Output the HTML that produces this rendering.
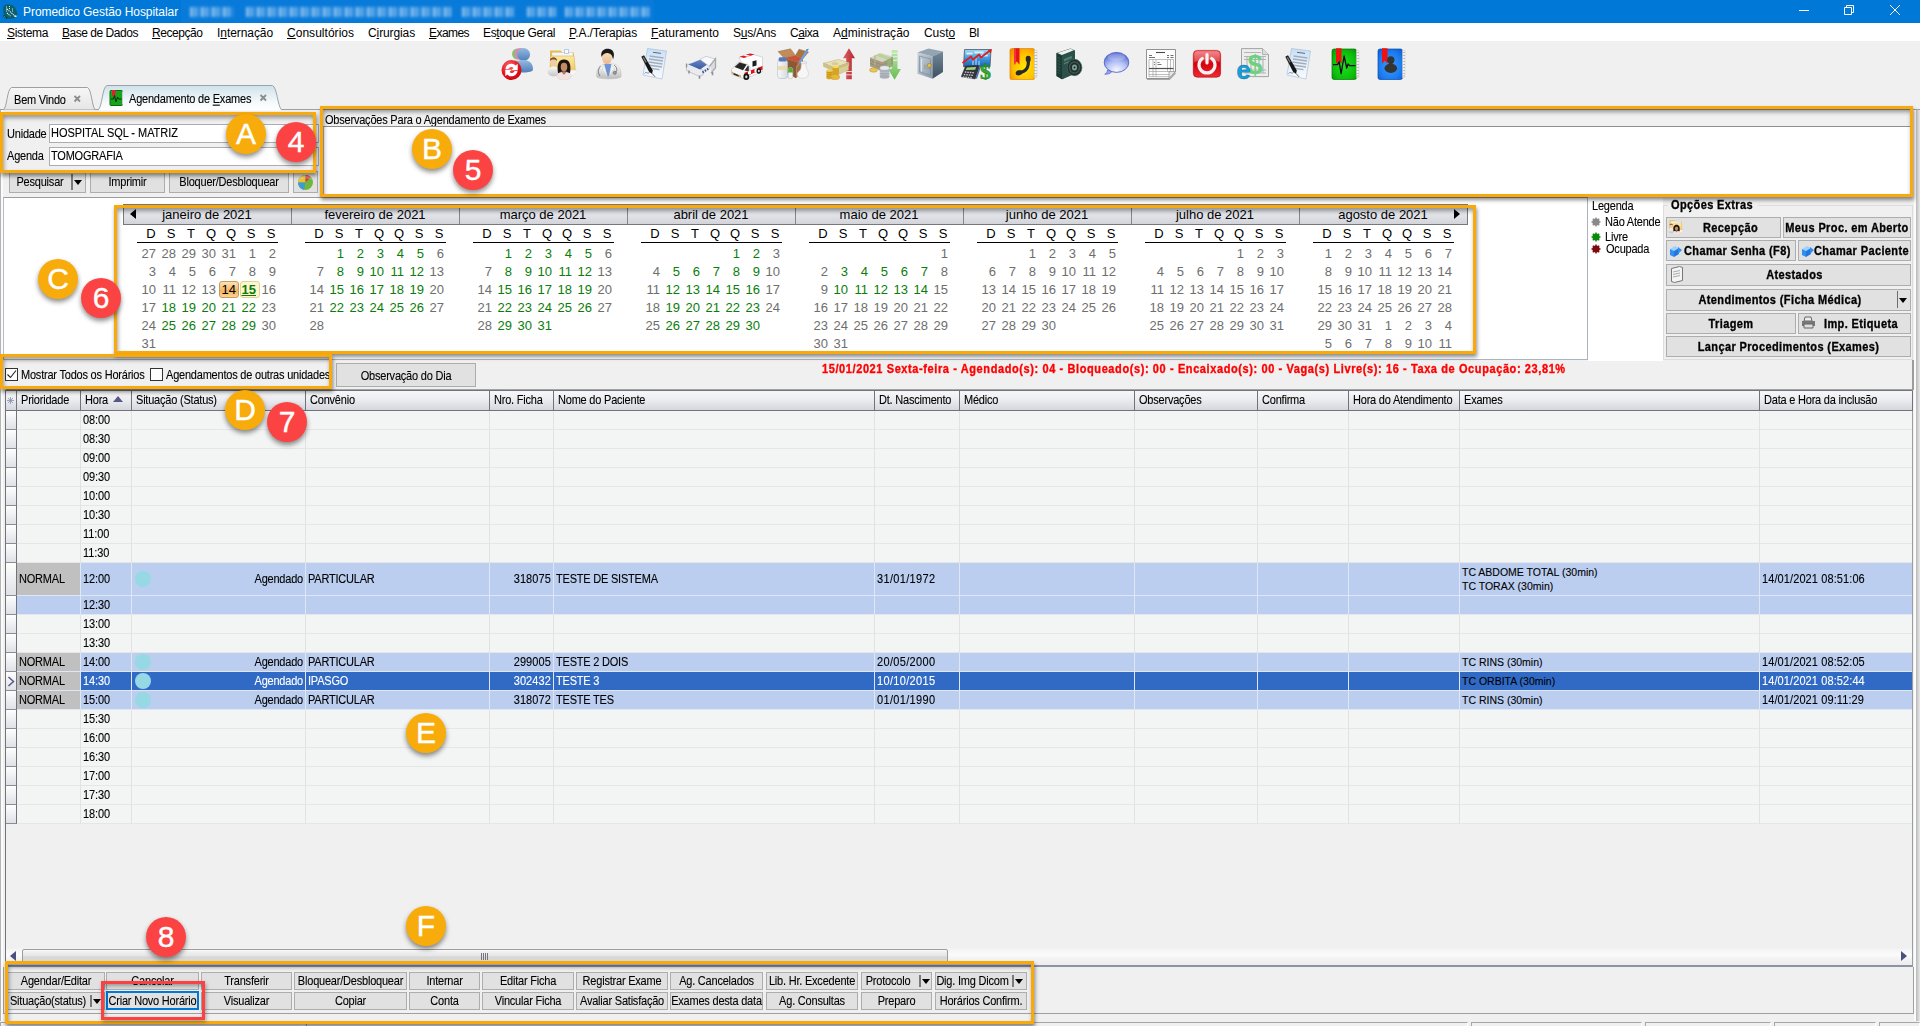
<!DOCTYPE html><html lang="pt-BR"><head><meta charset="utf-8"><title>Promedico Gestão Hospitalar</title><style>
*{box-sizing:border-box;margin:0;padding:0}
html,body{width:1920px;height:1026px;overflow:hidden;background:#f0f0f0}
body{position:relative;font-family:"Liberation Sans",sans-serif;font-size:11px;color:#000}
.a{position:absolute}
.t{position:absolute;white-space:nowrap;height:16px;line-height:16px;font-size:11px;letter-spacing:-.21px;transform:scaleY(1.12);-webkit-text-stroke:.1px}
.c{text-align:center}.r{text-align:right}
.b{font-weight:bold;letter-spacing:.38px;-webkit-text-stroke:.3px}
.btn{position:absolute;background:#e1e1e1;border:1px solid #adadad}
.ob{position:absolute;border:3px solid #f8a90c;box-shadow:1px 3px 4px rgba(0,0,0,.45),inset 1px 3px 4px rgba(0,0,0,.38)}
.circ{position:absolute;width:40px;height:40px;border-radius:50%;color:#fff;text-align:center;font-size:30px;line-height:40px;box-shadow:0 3px 5px rgba(0,0,0,.45);-webkit-text-stroke:.4px #fff}
.co{background:#f8ac0c}.cr{background:#fc4343}
.m{position:absolute;top:24px;height:18px;line-height:18px;font-size:12px;white-space:nowrap}
.m u{text-decoration:underline}
.cal{position:absolute;font-size:13px;white-space:nowrap;height:18px;line-height:18px}
.gr{color:#6e6e6e}.gn{color:#0a7d0a}
.hd{position:absolute;top:391px;height:20px;background:linear-gradient(#f7f7f9,#ecedf0 45%,#d5d7dd);border-right:1px solid #70737c;border-bottom:1px solid #70737c}
.row{position:absolute;left:17px;width:1895px;background:#f3f5f4;border-bottom:1px solid #e6e6e6}
.ind{position:absolute;left:6px;width:11px;background:linear-gradient(#fefefe,#dfe1e6);border-right:1px solid #70737c;border-bottom:1px solid #8a8d96}
.vl{position:absolute;width:1px;background:#e2e2e2}
.ar{font-size:10.500px;letter-spacing:0;transform:none}
.n{letter-spacing:.1px}
.nd{letter-spacing:.33px}
</style></head><body>
<div class="a" style="left:0;top:0;width:1920px;height:23px;background:#0078d7"></div>
<div class="a" style="left:181px;top:0;width:473px;height:24px;background:#087ad9;overflow:hidden"><div class="a" style="left:9px;top:7px;width:44px;height:10px;background:repeating-linear-gradient(90deg,#b4d8f7 0 3px,#3f97e2 3px 5px,#9ccbf3 5px 7px,#2f8de0 7px 11px);filter:blur(1.6px);opacity:.75"></div><div class="a" style="left:65px;top:7px;width:206px;height:10px;background:repeating-linear-gradient(90deg,#b4d8f7 0 3px,#3f97e2 3px 5px,#9ccbf3 5px 7px,#2f8de0 7px 11px);filter:blur(1.6px);opacity:.75"></div><div class="a" style="left:281px;top:7px;width:53px;height:10px;background:repeating-linear-gradient(90deg,#b4d8f7 0 3px,#3f97e2 3px 5px,#9ccbf3 5px 7px,#2f8de0 7px 11px);filter:blur(1.6px);opacity:.75"></div><div class="a" style="left:346px;top:7px;width:29px;height:10px;background:repeating-linear-gradient(90deg,#b4d8f7 0 3px,#3f97e2 3px 5px,#9ccbf3 5px 7px,#2f8de0 7px 11px);filter:blur(1.6px);opacity:.75"></div><div class="a" style="left:384px;top:7px;width:85px;height:10px;background:repeating-linear-gradient(90deg,#b4d8f7 0 3px,#3f97e2 3px 5px,#9ccbf3 5px 7px,#2f8de0 7px 11px);filter:blur(1.6px);opacity:.75"></div></div>
<svg class="a" style="left:2px;top:3px" width="17" height="17" viewBox="0 0 17 17"><path d="M2 2.500c3-2 8-1.500 10.500 1.500 2 2.500 3.500 6 2.500 9-1.500 2.500-7 3.500-10.500 2.500C1 13 .5 5.500 2 2.500z" fill="#0c5f6c"/><path d="M4.500 3.500v5.500M7.500 3v3M10.500 5.500v4" stroke="#dfeef0" stroke-width="1" stroke-dasharray="1 1"/><path d="M5 6l8.500 7.500M5 10l3.500 3" stroke="#eef6f7" stroke-width="1.100" stroke-dasharray="1.200 .8"/><path d="M12.500 12.500h2v1.500h-2z" fill="#e8f2f3"/><path d="M1.500 12.500l3.500 3" stroke="#0a2c33" stroke-width="1.500"/><path d="M2.500 13.500l1.500 1.300" stroke="#cfe" stroke-width=".8" stroke-dasharray=".8 .8"/></svg>
<div class="a" style="left:23px;top:3px;height:18px;line-height:18px;font-size:12px;color:#fff;white-space:nowrap;letter-spacing:-.06px">Promedico Gestão Hospitalar</div>
<svg class="a" style="left:1790px;top:0" width="130" height="23" viewBox="0 0 130 23" fill="none" stroke="#fff" stroke-width="1"><path d="M9 10.5h10"/><path d="M54.5 7.5h7v7h-7zM56.5 7.5v-2h7v7h-2"/><path d="M100 5l10 10M110 5l-10 10"/></svg>
<div class="a" style="left:0;top:23px;width:1920px;height:18px;background:#fff"></div>
<div class="m" style="left:7px;letter-spacing:-0.34px"><u>S</u>istema</div>
<div class="m" style="left:62px;letter-spacing:-0.47px"><u>B</u>ase de Dados</div>
<div class="m" style="left:152px;letter-spacing:-0.44px"><u>R</u>ecepção</div>
<div class="m" style="left:217px;letter-spacing:-0.07px">I<u>n</u>ternação</div>
<div class="m" style="left:287px;letter-spacing:0.03px"><u>C</u>onsultórios</div>
<div class="m" style="left:368px;letter-spacing:-0.11px">C<u>i</u>rurgias</div>
<div class="m" style="left:429px;letter-spacing:-0.56px"><u>E</u>xames</div>
<div class="m" style="left:483px;letter-spacing:-0.36px">Es<u>t</u>oque Geral</div>
<div class="m" style="left:569px;letter-spacing:-0.14px"><u>P</u>.A./Terapias</div>
<div class="m" style="left:651px;letter-spacing:-0.00px"><u>F</u>aturamento</div>
<div class="m" style="left:733px;letter-spacing:-0.24px">S<u>u</u>s/Ans</div>
<div class="m" style="left:790px;letter-spacing:-0.44px">C<u>a</u>ixa</div>
<div class="m" style="left:833px;letter-spacing:0.04px">A<u>d</u>ministração</div>
<div class="m" style="left:924px;letter-spacing:-0.07px">Cust<u>o</u></div>
<div class="m" style="left:969px;letter-spacing:-0.67px">BI</div>
<svg class="a" style="left:501px;top:48px" width="32" height="32" viewBox="0 0 32 32"><defs><linearGradient id="i0a" x1="0" y1="0" x2="0" y2="1"><stop offset="0" stop-color="#97b9df"/><stop offset="1" stop-color="#4d80bc"/></linearGradient><radialGradient id="i0b" cx="0.4" cy="0.3" r="0.8"><stop offset="0" stop-color="#ff6a6e"/><stop offset="0.6" stop-color="#e3101c"/><stop offset="1" stop-color="#c4000c"/></radialGradient></defs><circle cx="16.500" cy="6" r="5.500" fill="#84c46c"/><path d="M9 20c0-5 3-7.500 7.500-7.500v9z" fill="#84c46c"/><circle cx="19.300" cy="6" r="6" fill="#d889b2"/><path d="M11.500 21c0-5.500 3-8.500 8-8.500v9z" fill="#d889b2"/><circle cx="22.600" cy="6.500" r="6.500" fill="url(#i0a)"/><path d="M13.500 21.500c0-6 3-9.500 9-9.500s9.500 3.500 9.500 9.500c0 2-4 3-9.500 3s-9-1-9-3z" fill="url(#i0a)"/><circle cx="10.500" cy="22" r="10" fill="url(#i0b)"/><path d="M4.500 21a6 6 0 0 1 10.300-3.400l1.900-1.800v6.400h-6.400l2.200-2.200a3.200 3.200 0 0 0-5.200 1z" fill="#fff"/><path d="M16.500 23a6 6 0 0 1-10.300 3.400l-1.900 1.800v-6.400h6.400l-2.200 2.200a3.200 3.200 0 0 0 5.200-1z" fill="#fff"/></svg>
<svg class="a" style="left:547px;top:48px" width="32" height="32" viewBox="0 0 32 32"><defs><linearGradient id="i1a" x1="0" y1="0" x2="0" y2="1"><stop offset="0" stop-color="#fde9a4"/><stop offset="1" stop-color="#efc558"/></linearGradient><linearGradient id="i1b" x1="0" y1="0" x2="0" y2="1"><stop offset="0" stop-color="#fafafa"/><stop offset="1" stop-color="#c4c4c4"/></linearGradient></defs><path d="M3 2.500h10.500l2 2H27v20H3z" fill="#e6bd55"/><path d="M5 4.500h21v7H5z" fill="#f6f6f6" stroke="#c8c8c8" stroke-width=".4"/><path d="M17.500 1.500h4v4h-4z" fill="#fafafa" stroke="#7aa0d8" stroke-width=".5"/><path d="M3.500 8h23.500l1.500 17H3z" fill="url(#i1a)" stroke="#d3a53c" stroke-width=".5"/><path d="M24 22l7 .5-4 4.500h-8z" fill="#f6f6f6" stroke="#ddd" stroke-width=".4"/><ellipse cx="6.500" cy="23.500" rx="6" ry="5" fill="url(#i1b)"/><ellipse cx="6.500" cy="14" rx="3.400" ry="4.200" fill="#f1cda6"/><path d="M3 13c-.5-5 7.500-5 7 0-1.500-2-5.500-2-7 0z" fill="#80562f"/><path d="M11 25c-1.500-9.500 1-13.500 6-13.500s7.500 4 6 13.500z" fill="#1b1310"/><ellipse cx="17" cy="19" rx="3.300" ry="4.200" fill="#c58b63"/><ellipse cx="17" cy="28" rx="7" ry="4.300" fill="#f1e3e3" stroke="#d4c4c4" stroke-width=".4"/><path d="M14.500 24l2.500 3 2.500-3z" fill="#b57a55"/></svg>
<svg class="a" style="left:593px;top:48px" width="32" height="32" viewBox="0 0 32 32"><defs><linearGradient id="i2a" x1="0" y1="0" x2="0" y2="1"><stop offset="0" stop-color="#ffffff"/><stop offset="1" stop-color="#bdbdbd"/></linearGradient><linearGradient id="i2b" x1="0" y1="0" x2="0" y2="1"><stop offset="0" stop-color="#fae3c3"/><stop offset="1" stop-color="#e9b98c"/></linearGradient></defs><path d="M3.800 29c-1-8.500 3-13.500 12.200-13.500S29 20.500 28 29c-4 2.500-20.200 2.500-24.200 0z" fill="url(#i2a)" stroke="#b4b4b4" stroke-width=".4"/><path d="M11 16h7.500l-1.700 11.500-2.300 1.500z" fill="#6b95d6"/><path d="M11 16l3.500 13-5-8zM18.500 16l-2.500 13 5-9z" fill="#f4f4f4" stroke="#c8c8c8" stroke-width=".4"/><ellipse cx="14" cy="9.500" rx="5" ry="6.700" fill="url(#i2b)"/><path d="M8.500 9c-1.500-6.500 3.500-9 8-8s5.500 5.500 3.500 10.500c-.5-3.500-1.500-5.800-4.500-6.300-3-.5-5.500.8-7 3.800z" fill="#191919"/><path d="M7.500 18c-3 4-2.500 7.500-.5 10M21 17c3.500 2.500 3.500 5.500 1.500 7.500" stroke="#6a6a6a" fill="none" stroke-width=".8"/><circle cx="21.800" cy="24.800" r="1.600" fill="#9a9a9a" stroke="#555" stroke-width=".5"/></svg>
<svg class="a" style="left:639px;top:48px" width="32" height="32" viewBox="0 0 32 32"><defs><linearGradient id="i3a" x1="0" y1="0" x2="0" y2="1"><stop offset="0" stop-color="#c6def6"/><stop offset="0.5" stop-color="#e6f0fa"/><stop offset="1" stop-color="#f7fafd"/></linearGradient></defs><path d="M8.500 .5l19 2.500-4.500 28-19-4z" fill="url(#i3a)" stroke="#a3b9d3" stroke-width=".6"/><path d="M14 4.300l8 1.100" stroke="#5a6a80" stroke-width="1"/><path d="M10.500 8l14 2M10 11l14 2M9.500 14l14 2M9 17l14 2M8.500 20l12 1.700" stroke="#a3aebd" stroke-width="1.300"/><path d="M2.300 8.800l2.700-1.600 8.800 15.300-.8 3.200-2.800-1.800z" fill="#161616"/><path d="M3.500 9.500l1.300-.8 3 5.300-1.300.8z" fill="#777"/><path d="M12.800 25.200l3.200 3.600" stroke="#444" stroke-width=".8"/><path d="M5.500 25.500c2-2.500 3 1 5-1.200" stroke="#4a6ea8" fill="none" stroke-width=".8"/></svg>
<svg class="a" style="left:685px;top:48px" width="32" height="32" viewBox="0 0 32 32"><defs><linearGradient id="i4a" x1="0" y1="0" x2="0" y2="1"><stop offset="0" stop-color="#6787c7"/><stop offset="1" stop-color="#3a5aa3"/></linearGradient></defs><path d="M1.500 17.500l3.500-2 13 6.500v5l-3.500 1.500-13-6z" fill="#e9ebee" stroke="#a9adb5" stroke-width=".6"/><path d="M3.500 16.500l12-5 9 3.500-9.500 6.500z" fill="url(#i4a)"/><path d="M15 11.500l6-3.200 9 2.700-5.500 7.500z" fill="#f8f9fb" stroke="#b3b7be" stroke-width=".6"/><path d="M24.500 18.500l6-7.800v9l-4.500 5.500" stroke="#a3a7ae" fill="none" stroke-width="1.300"/><path d="M27 15.500v8M29 13v8" stroke="#b8bcc3" stroke-width=".8"/><path d="M1.500 15.500v4" stroke="#8d9199" stroke-width="1.300"/><path d="M17.500 24.500l7-4.500" stroke="#3a5aa3" stroke-width="2.200" stroke-dasharray="1.600 1.100"/><path d="M14.500 27.500v3.300M4 22.500v3M27.500 24v3.300" stroke="#8d9199" stroke-width="1.600"/></svg>
<svg class="a" style="left:731px;top:48px" width="32" height="32" viewBox="0 0 32 32"><path d="M8 9.500l12-3.500 11.500 3v14.500l-13 5.500z" fill="#fdfdfd" stroke="#c2c2c2" stroke-width=".6"/><path d="M8.500 8.700l10.500-3.200 4.500 1.100-10.500 3.400z" fill="#e8141c"/><path d="M12 7.600l3-.9 4.500 1.100-3 1z" fill="#fafafa"/><path d="M.5 21.500l7-7.500 9.500 2.500 2 2.800v9.700l-5 2.200-13.500-5z" fill="#f6f6f6" stroke="#b9b9b9" stroke-width=".6"/><path d="M3.500 19l5-4.500 7.200 2-3.700 5.700z" fill="#262626"/><path d="M13.500 22.500l3.500-5 .8 1v5z" fill="#333"/><path d="M21.500 13.300l4-1.100v5.300l-4 1.300z" fill="#1d1d1d"/><path d="M13.500 24.800l18-6.800v3.500l-18 7.200z" fill="#e01018"/><path d="M17 23.500l3-1.200v3.600l-3 1.200zM23.500 21l3-1.100v3.500l-3 1.200z" fill="#fdfdfd"/><ellipse cx="15.300" cy="28.700" rx="2.900" ry="3.300" fill="#0f0f0f"/><ellipse cx="15.300" cy="28.700" rx="1.200" ry="1.500" fill="#d8d8d8"/><ellipse cx="27.800" cy="23" rx="2.300" ry="2.800" fill="#0f0f0f"/><ellipse cx="27.800" cy="23" rx="1" ry="1.200" fill="#d8d8d8"/><path d="M2.300 24.800l5.500 2.200v1.800l-5.500-2.200z" fill="#2b2b2b"/><path d="M.8 23.600l1.600.6v1.700l-1.600-.6zM7.800 26.700l2.200.9v1.700l-2.200-.9z" fill="#f5a11c"/></svg>
<svg class="a" style="left:777px;top:48px" width="32" height="32" viewBox="0 0 32 32"><defs><linearGradient id="i6a" x1="0" y1="0" x2="1" y2="0"><stop offset="0" stop-color="#f7f9fb"/><stop offset="1" stop-color="#d5dbe2"/></linearGradient></defs><path d="M1 3.500l12.500-2.700 5 6.700-11.500 2.500z" fill="#c28c5a" stroke="#8e5f36" stroke-width=".4"/><path d="M18.500 7.500l3.500-6.300 9.500 2.800-5.500 6.500z" fill="#aa7440" stroke="#8e5f36" stroke-width=".4"/><path d="M7 10l11.500-2.500 7.500 3-6 3.800z" fill="#c5543b"/><path d="M11 11.500l9 2.800 6-3.800v3l-6 5z" fill="#b8482f"/><path d="M7 10l13 4.300-1 16-9-5z" fill="#8d5934"/><path d="M20 14.300l6-3.800v12l-7 7.800z" fill="#a66e43"/><rect x=".6" y="12" width="10" height="18.500" rx="2.600" fill="url(#i6a)" stroke="#b3bac3" stroke-width=".6"/><rect x="1.600" y="9.300" width="8" height="4.200" rx="1.600" fill="#5679ba"/><rect x="1" y="18" width="9.200" height="4" fill="#ead9a0" opacity=".85"/><path d="M30.300 2l-7.800 13" stroke="#6ea0da" stroke-width="2.200"/><path d="M31.500 1.200l-2.500 1" stroke="#4a78b8" stroke-width="1"/><path d="M22.500 15l-2.500 4" stroke="#a0a0a0" stroke-width=".9"/><path d="M24.500 14.500h4.500v4l2.500 6c0 4.200-2 5.800-6 5.800s-5.200-2-5.200-4.200 3.200-3 3.700-6z" fill="#f6f6f6" stroke="#c6c6c6" stroke-width=".5"/><rect x="24" y="13.500" width="5.500" height="2.200" rx=".6" fill="#ececec" stroke="#bdbdbd" stroke-width=".4"/><rect x="11.200" y="19.500" width="4.600" height="11.300" rx="2.300" fill="#f3f3f3" stroke="#b8b8b8" stroke-width=".5"/><path d="M11.200 24.500v-2.700a2.300 2.300 0 0 1 4.600 0v2.700z" fill="#4fb03a"/></svg>
<svg class="a" style="left:823px;top:48px" width="32" height="32" viewBox="0 0 32 32"><defs><linearGradient id="i7a" x1="0" y1="0" x2="1" y2="0"><stop offset="0" stop-color="#de6166"/><stop offset="1" stop-color="#b3262d"/></linearGradient></defs><path d="M26 .3l6 9.900h-3.200v21h-5.600v-21H20z" fill="url(#i7a)"/><path d="M23.200 23.500h5.600M23.200 26.800h5.600" stroke="#f0f0f0" stroke-width=".9"/><path d="M.5 15.200l15-3.700 10.500 3.200-15 5z" fill="#e9e2b4" stroke="#b5ab74" stroke-width=".5"/><path d="M.5 15.200v3.300l10.500 4.700 15-5.200v-3.300l-15 5z" fill="#cdc389" stroke="#b5ab74" stroke-width=".4"/><ellipse cx="12" cy="15.500" rx="3.500" ry="1.600" fill="#d6cd98"/><path d="M14.500 20.500l11-4v5.500l-9 4z" fill="#d8cf98" stroke="#b5ab74" stroke-width=".4"/><rect x="9.500" y="18.800" width="6.400" height="9.500" fill="#deac2c"/><ellipse cx="12.700" cy="18.800" rx="3.200" ry="1.400" fill="#f7da64"/><path d="M9.500 21h6.400M9.500 23h6.400M9.500 25h6.400" stroke="#b98a18" stroke-width=".5"/><rect x="3.500" y="22.500" width="6.200" height="7.500" fill="#d9a724"/><ellipse cx="6.600" cy="22.500" rx="3.100" ry="1.300" fill="#f3cf55"/><path d="M3.500 24.500h6.200M3.500 26.500h6.200M3.500 28.500h6.200" stroke="#b98a18" stroke-width=".5"/><ellipse cx="12" cy="29" rx="4.600" ry="2.800" fill="#e6b836" stroke="#b98a18" stroke-width=".4"/><ellipse cx="6.600" cy="30" rx="3.100" ry="1.300" fill="#d9a724"/></svg>
<svg class="a" style="left:869px;top:48px" width="32" height="32" viewBox="0 0 32 32"><defs><linearGradient id="i8a" x1="0" y1="0" x2="0" y2="1"><stop offset="0" stop-color="#bfe8ac"/><stop offset="1" stop-color="#69bb52"/></linearGradient></defs><path d="M22.700 2h5.800v19H32l-6.400 10.800L19 21h3.700z" fill="url(#i8a)"/><path d="M22.700 5.200h5.800M22.700 8.700h5.800M22.700 12.200h5.800" stroke="#f0f0f0" stroke-width="1.100"/><path d="M1 9.500l10.500-4.500 12.500 3.500-10.500 5.500z" fill="#dcd2bf"/><path d="M1 9.500v8.800l12.500 5.200 10.500-5.800V8.500l-10.500 5.500z" fill="#a89b83"/><path d="M1 12.300l12.500 5 10.500-5.600M1 15.200l12.500 5 10.500-5.600" stroke="#877b66" stroke-width=".5" fill="none"/><path d="M6 7.300l4.200-1.800 12 4.200-4 2z" fill="#b5d49b"/><path d="M18.200 11.700l4-2v9.300l-4 2.200z" fill="#8fb674"/><path d="M6 7.300v10.300" stroke="#9cc283" stroke-width="1.200"/><ellipse cx="4.500" cy="22" rx="4" ry="2.200" fill="#e6c75a" stroke="#b3932a" stroke-width=".5"/><rect x="10.800" y="20" width="9.600" height="8.500" fill="#b9bec6"/><ellipse cx="15.600" cy="28.500" rx="4.800" ry="2.200" fill="#a9aeb6"/><ellipse cx="15.600" cy="20" rx="4.800" ry="2.200" fill="#e6e9ed" stroke="#a1a6ae" stroke-width=".4"/><path d="M10.800 23h9.600M10.800 25.500h9.600" stroke="#8f949c" stroke-width=".5"/></svg>
<svg class="a" style="left:915px;top:48px" width="32" height="32" viewBox="0 0 32 32"><defs><linearGradient id="i9a" x1="0" y1="0" x2="1" y2="1"><stop offset="0" stop-color="#c9d3dc"/><stop offset="1" stop-color="#8a9aa8"/></linearGradient><linearGradient id="i9b" x1="0" y1="0" x2="0" y2="1"><stop offset="0" stop-color="#73899a"/><stop offset="1" stop-color="#3c4f5f"/></linearGradient></defs><path d="M2.500 4.500l11-4 14.500 3-10.500 5z" fill="#93a4b3"/><path d="M2.500 4.500l15 4v22.300l-15-5z" fill="url(#i9a)"/><path d="M17.500 8.500l10.500-5v20.500l-10.500 6.800z" fill="url(#i9b)"/><path d="M4.500 8l11 3v16.500l-11-3.700z" fill="none" stroke="#7c8c9a" stroke-width=".7"/><path d="M6.500 11v12.500" stroke="#dfe5ea" stroke-width="1.200"/><path d="M9.500 17l5 1.300v3l-5-1.300z" fill="#9fb0be" stroke="#7c8c9a" stroke-width=".4"/><circle cx="14.200" cy="17.500" r="2.100" fill="#e6bd3e" stroke="#96761a" stroke-width=".5"/></svg>
<svg class="a" style="left:961px;top:48px" width="32" height="32" viewBox="0 0 32 32"><defs><linearGradient id="i10a" x1="0" y1="0" x2="0" y2="1"><stop offset="0" stop-color="#9fd8f7"/><stop offset="0.5" stop-color="#3f9be0"/><stop offset="1" stop-color="#1c62b5"/></linearGradient></defs><path d="M3.500 1.500h26.500l-1 17.200H2.500z" fill="url(#i10a)" stroke="#4a5866" stroke-width=".8"/><path d="M6 5.500h5M14 4.500h8M21 7.500h5" stroke="#eef7fd" stroke-width="1.800" opacity=".85" stroke-linecap="round"/><path d="M12 12v5M15 10v7M18 13v4" stroke="#d8ecfb" stroke-width=".9"/><path d="M1.500 15l8.500-6.500 2 3.200 6-5.200 2 3 9-7" stroke="#e01c1c" stroke-width="1.700" fill="none"/><path d="M31 1l-1.200 4.500-3-3z" fill="#e01c1c"/><path d="M4.500 18l12.500-.6 1.200 2.600-4 11-14-2.200z" fill="#33353b" stroke="#1f2125" stroke-width=".4"/><path d="M5.800 19.400l9.200-.4-.8 2.700-9.400.3z" fill="#a2d37c"/><path d="M3.800 24l9.200.8M2.800 26.500l9.200.9M1.800 29l9.200 1" stroke="#c2c6cd" stroke-width="1.400" stroke-dasharray="1.600 .9"/><path d="M19.300 18.500l-4 12" stroke="#4a78b8" stroke-width="1.500"/><text x="19" y="30.500" font-size="22" font-weight="bold" fill="#2fab2f" stroke="#187a18" stroke-width=".5" font-family="Liberation Serif,serif">$</text></svg>
<svg class="a" style="left:1007px;top:48px" width="32" height="32" viewBox="0 0 32 32"><defs><radialGradient id="i11a" cx="0.6" cy="0.6" r="0.75"><stop offset="0" stop-color="#ffe600"/><stop offset="0.55" stop-color="#ffc400"/><stop offset="1" stop-color="#f78f00"/></radialGradient></defs><rect x="3" y=".6" width="24.500" height="31" rx="1.600" fill="url(#i11a)" stroke="#dc8200" stroke-width=".7"/><rect x="27.400" y="2.500" width="2.600" height="27" fill="#f4f4f4" stroke="#c4c4c4" stroke-width=".4"/><path d="M27.400 4.500h2.600M27.400 7.500h2.600M27.400 10.500h2.600M27.400 13.500h2.600M27.400 16.500h2.600M27.400 19.500h2.600M27.400 22.500h2.600M27.400 25.500h2.600M27.400 28h2.600" stroke="#a8a8a8" stroke-width=".7"/><path d="M7 .3h5.500v16.500l-2.700-3.200-2.800 3.200z" fill="#e8141c"/><path d="M7 .3h2v16l-2 .5z" fill="#ff4a4a" opacity=".6"/><path d="M21.300 11.500C22 19.500 19 24 12 24.600" stroke="#28282e" stroke-width="3.200" fill="none"/><ellipse cx="21.200" cy="11" rx="2.500" ry="3.300" fill="#28282e"/><ellipse cx="12" cy="24.800" rx="3.400" ry="2.500" transform="rotate(-12 12 24.800)" fill="#28282e"/></svg>
<svg class="a" style="left:1053px;top:48px" width="32" height="32" viewBox="0 0 32 32"><path d="M3.500 5l14-4.500 4.500 2v23l-13 5.700-5.500-3.200z" fill="#284c45"/><path d="M3.500 5l5.500 3.200v23l-5.500-3.200z" fill="#1c3a33"/><path d="M4.300 4.900l13.300-4.200 3.300 1.500-12 4.700z" fill="#edf1ee"/><path d="M9 8.200l13-5.700v23l-13 5.700z" fill="#2b514a"/><path d="M11 11l8-3.300v2.500l-8 3.300zM11 15l5-2v1.500l-5 2z" fill="#5b8a80" opacity=".75"/><path d="M5.200 9v16M6.800 10v16" stroke="#4f7d73" stroke-width=".5" stroke-dasharray="1.500 1.500"/><ellipse cx="21.500" cy="19.500" rx="7.400" ry="8.200" fill="#1f2f2b" stroke="#47665e" stroke-width=".7"/><ellipse cx="21.500" cy="19.500" rx="5" ry="5.600" fill="none" stroke="#3a5750" stroke-width="1.500"/><ellipse cx="21.500" cy="19.500" rx="2.500" ry="2.900" fill="#7fa398"/><circle cx="21.500" cy="19.500" r="1" fill="#16211e"/></svg>
<svg class="a" style="left:1099px;top:48px" width="32" height="32" viewBox="0 0 32 32"><defs><radialGradient id="i13a" cx="0.5" cy="0.9" r="0.95"><stop offset="0" stop-color="#f6f8ff"/><stop offset="0.45" stop-color="#b4c1f5"/><stop offset="1" stop-color="#3c4fca"/></radialGradient></defs><path d="M8.500 22c-.3 2.200-1.300 3.400-2.800 4.200 3.300.3 5.800-.8 7.300-2.700z" fill="#93a4ec" stroke="#4759c3" stroke-width=".6"/><ellipse cx="17.500" cy="14.400" rx="12.300" ry="10" fill="url(#i13a)" stroke="#4355c0" stroke-width=".8"/><ellipse cx="17.500" cy="9" rx="9" ry="3.800" fill="#fff" opacity=".22"/></svg>
<svg class="a" style="left:1145px;top:48px" width="32" height="32" viewBox="0 0 32 32"><path d="M2 31.300h22.500l6-6.300" stroke="#a8a8a8" stroke-width="1.200" fill="none"/><path d="M1.500 1.500h29v22l-6.500 7H1.500z" fill="#fdfdfd" stroke="#868686" stroke-width=".9"/><path d="M24 30.500v-7h6.500z" fill="#e6e6e6" stroke="#868686" stroke-width=".7"/><path d="M11 4.500h9" stroke="#4a4a4a" stroke-width="1.100"/><path d="M4 7.500h3M4 9.500h6M22 7.500h2M25.500 7.500h3M22 9.500h2M25.500 9.500h3" stroke="#707070" stroke-width="1"/><path d="M4 11.500h24.500M4 23.500h20M4 26.500h20M4 28.700h20M4 11.500v17.200M8 11.500v17.200M11 11.500v17.200M22.500 11.500v12M25.500 11.500v12M28.500 11.500v12" stroke="#a2a2a2" stroke-width=".7" fill="none"/><path d="M9 14.500h1M9 16.500h1M12.500 14.500h2M12.500 16.500h4" stroke="#6a6a6a" stroke-width=".9"/><path d="M4 20.500h24.500" stroke="#505050" stroke-width="1.200"/></svg>
<svg class="a" style="left:1191px;top:48px" width="32" height="32" viewBox="0 0 32 32"><defs><linearGradient id="i15a" x1="0" y1="0" x2="0" y2="1"><stop offset="0" stop-color="#f26a6e"/><stop offset="0.5" stop-color="#d4000d"/><stop offset="1" stop-color="#ec2e36"/></linearGradient></defs><rect x="2.300" y="2.400" width="27.300" height="26.800" rx="4" fill="url(#i15a)" stroke="#b4000a" stroke-width=".6"/><path d="M3.300 6.400a3 3 0 0 1 3-3h19.400a3 3 0 0 1 3 3v7.600c-8-3-17.400-3-25.400 0z" fill="#fff" opacity=".22"/><path d="M11.300 10.500a8 8 0 1 0 9.400 0" stroke="#f1f1f1" stroke-width="3.200" fill="none" stroke-linecap="round"/><path d="M16 6.700v8.300" stroke="#f1f1f1" stroke-width="3.200" stroke-linecap="round"/></svg>
<svg class="a" style="left:1237px;top:48px" width="32" height="32" viewBox="0 0 32 32"><path d="M4.500 .6h21l6 6v22h-27z" fill="#ededed" stroke="#9a9a9a" stroke-width=".9"/><path d="M25.500 .6v6h6" fill="#dcdcdc" stroke="#9a9a9a" stroke-width=".7"/><path d="M7 4.500h17M7 8.500h22M7 11.500h22M7 22h22M7 25h22M10 8.500v16.500M14 8.500v16.500M22 8.500v16.500M26 8.500v16.500" stroke="#b4b4b4" stroke-width="1.100" fill="none"/><text x="10.500" y="25.500" font-size="27" font-weight="bold" fill="#6fd081" font-family="Liberation Sans,sans-serif">$</text><text x="-.8" y="31.300" font-size="26" font-weight="bold" fill="#169fdc" stroke="#0b6fa8" stroke-width=".3" font-family="Liberation Sans,sans-serif">e</text></svg>
<svg class="a" style="left:1283px;top:48px" width="32" height="32" viewBox="0 0 32 32"><defs><linearGradient id="i17a" x1="0" y1="0" x2="0" y2="1"><stop offset="0" stop-color="#c6def6"/><stop offset="0.5" stop-color="#e6f0fa"/><stop offset="1" stop-color="#f7fafd"/></linearGradient></defs><path d="M8.500 .5l19 2.500-4.500 28-19-4z" fill="url(#i17a)" stroke="#a3b9d3" stroke-width=".6"/><path d="M14 4.300l8 1.100" stroke="#5a6a80" stroke-width="1"/><path d="M10.500 8l14 2M10 11l14 2M9.500 14l14 2M9 17l14 2M8.500 20l12 1.700" stroke="#a3aebd" stroke-width="1.300"/><path d="M2.300 8.800l2.700-1.600 8.800 15.300-.8 3.200-2.800-1.800z" fill="#161616"/><path d="M3.500 9.500l1.300-.8 3 5.300-1.300.8z" fill="#777"/><path d="M12.800 25.200l3.200 3.600" stroke="#444" stroke-width=".8"/><path d="M5.500 25.500c2-2.500 3 1 5-1.200" stroke="#4a6ea8" fill="none" stroke-width=".8"/></svg>
<svg class="a" style="left:1329px;top:48px" width="32" height="32" viewBox="0 0 32 32"><defs><radialGradient id="i18a" cx="0.5" cy="0.55" r="0.75"><stop offset="0" stop-color="#1fe01f"/><stop offset="0.6" stop-color="#0cc00c"/><stop offset="1" stop-color="#078c07"/></radialGradient></defs><rect x="3" y="1" width="24.500" height="30.500" rx="2" fill="url(#i18a)" stroke="#067606" stroke-width=".7"/><rect x="27.400" y="2.500" width="2.600" height="27" fill="#f4f4f4" stroke="#c4c4c4" stroke-width=".4"/><path d="M27.400 4.500h2.600M27.400 7.500h2.600M27.400 10.500h2.600M27.400 13.500h2.600M27.400 16.500h2.600M27.400 19.500h2.600M27.400 22.500h2.600M27.400 25.500h2.600M27.400 28h2.600" stroke="#a8a8a8" stroke-width=".7"/><path d="M7 .3h5.500v15.500l-2.700-3.200-2.800 3.200z" fill="#f21010"/><path d="M4 16.600h4.600l1.500-3 2 12 3-17.600 2.600 12 1.400-4 1.500 1.600h5.900" stroke="#1c0a1c" stroke-width="1.300" fill="none" stroke-linejoin="round"/></svg>
<svg class="a" style="left:1375px;top:48px" width="32" height="32" viewBox="0 0 32 32"><defs><radialGradient id="i19a" cx="0.5" cy="0.55" r="0.75"><stop offset="0" stop-color="#3a9cff"/><stop offset="0.6" stop-color="#1b7df0"/><stop offset="1" stop-color="#0d56cc"/></radialGradient></defs><rect x="3" y="1" width="24.500" height="30.500" rx="2" fill="url(#i19a)" stroke="#0b48ae" stroke-width=".7"/><rect x="27.400" y="2.500" width="2.600" height="27" fill="#f4f4f4" stroke="#c4c4c4" stroke-width=".4"/><path d="M27.400 4.500h2.600M27.400 7.500h2.600M27.400 10.500h2.600M27.400 13.500h2.600M27.400 16.500h2.600M27.400 19.500h2.600M27.400 22.500h2.600M27.400 25.500h2.600M27.400 28h2.600" stroke="#a8a8a8" stroke-width=".7"/><path d="M7 .3h5.500v15.500l-2.700-3.200-2.800 3.200z" fill="#f21010"/><circle cx="15.800" cy="12" r="3.700" fill="#343434"/><rect x="14" y="14.500" width="3.600" height="3" fill="#343434"/><ellipse cx="15.800" cy="20.300" rx="6.300" ry="4.600" fill="#343434"/></svg>
<div class="a" style="left:0;top:110px;width:1px;height:911px;background:#b4b4b4"></div><div class="a" style="left:1px;top:110px;width:2px;height:911px;background:#fbfbfb"></div>
<div class="a" style="left:1914px;top:110px;width:2px;height:911px;background:#fbfbfb"></div><div class="a" style="left:1916px;top:110px;width:4px;height:911px;background:linear-gradient(90deg,#b9b9b9,#e8e8e8)"></div>
<svg class="a" style="left:0;top:84px" width="300" height="28" viewBox="0 0 300 28"><defs><linearGradient id="tg" x1="0" y1="0" x2="0" y2="1"><stop offset="0" stop-color="#cfe1ea"/><stop offset=".7" stop-color="#f6fafc"/><stop offset="1" stop-color="#ffffff"/></linearGradient><linearGradient id="tg2" x1="0" y1="0" x2="0" y2="1"><stop offset="0" stop-color="#f6f6f6"/><stop offset="1" stop-color="#e6e6e6"/></linearGradient></defs><path d="M0 25.500H300" stroke="#a0a0a0"/><path d="M3.500 25.500C7 24 7 5 11.500 3.500H87.500c4 1.500 4.500 19 7.500 22" fill="url(#tg2)" stroke="#a0a0a0"/><path d="M98 26C102.500 23 102 3 107 1.500H272.500c4.500 1.500 5 20 9 24.500" fill="url(#tg)" stroke="#9aa4ac"/><path d="M99 26H281" stroke="#fff"/><path d="M74.500 12l5.500 5.500M80 12l-5.500 5.500M260.500 11l5.500 5.500M266 11l-5.500 5.500" stroke="#8c8c8c" stroke-width="1.800"/><rect x="110" y="6.500" width="12.500" height="15" rx="1" fill="#14a51c" stroke="#0a6d10"/><path d="M122.500 7.500v13" stroke="#ccc"/><path d="M112 6h3.500v7l-1.700-2-1.800 2z" fill="#e0202a"/><path d="M111 15h2.500l1-3.500 1.500 6.500 1.500-5 1 2h3" stroke="#0b2b0b" fill="none"/></svg>
<div class="t " style="left:14px;top:92px;">Bem Vindo</div>
<div class="t " style="left:129px;top:90.5px;">Agendamento de <u>E</u>xames</div>
<div class="a" style="left:300px;top:109px;width:1620px;height:1px;background:#a0a0a0"></div>
<div class="t " style="left:7px;top:126px;">Unidade</div>
<div class="t " style="left:7px;top:148px;">Agenda</div>
<div class="a" style="left:49px;top:124px;width:270px;height:19px;background:#fff;border:1px solid #abadb3"></div>
<div class="a" style="left:49px;top:147px;width:270px;height:19px;background:#fff;border:1px solid #abadb3"></div>
<div class="t " style="left:51px;top:124.5px;letter-spacing:-.04px">HOSPITAL SQL - MATRIZ</div>
<div class="t " style="left:51px;top:147.5px;">TOMOGRAFIA</div>
<div class="btn" style="left:9px;top:171px;width:77px;height:22px;"></div>
<div class="t c" style="left:9px;top:174px;width:62px;">Pesquisar</div>
<div class="a" style="left:71px;top:174px;width:2px;height:16px;background:#7a7a7a"></div><div class="a" style="left:74px;top:180px;border:4px solid transparent;border-top:5px solid #000;border-bottom:0"></div>
<div class="btn" style="left:90px;top:171px;width:75px;height:22px;"></div>
<div class="t c " style="left:90px;top:174.0px;width:75px;">Imprimir</div>
<div class="btn" style="left:169px;top:171px;width:120px;height:22px;"></div>
<div class="t c " style="left:169px;top:174.0px;width:120px;">Bloquer/Desbloquear</div>
<div class="btn" style="left:293px;top:171px;width:25px;height:22px;"></div>
<svg class="a" style="left:297px;top:174px" width="17" height="17" viewBox="0 0 17 17"><circle cx="8.5" cy="8.5" r="7.5" fill="#6fb83a"/><path d="M8.5 8.5L1 8.5A7.5 7.5 0 0 1 8.5 1z" fill="#f0c22e"/><path d="M8.5 8.5L8.5 1A7.5 7.5 0 0 1 13.8 3.2z" fill="#dc3c34"/><path d="M8.5 8.5L7 15.850A7.500 7.500 0 0 1 1 8.500z" fill="#3f9ad8"/><path d="M2 6a7 7 0 0 1 13 0c-4-2-9-2-13 0z" fill="#fff" opacity=".3"/></svg>
<div class="t " style="left:325px;top:111.5px;">Observações Para o Agendamento de Exames</div>
<div class="a" style="left:323px;top:126px;width:1588px;height:69px;background:#fff;border:1px solid #abadb3;border-top-color:#8e8e8e"></div>
<div class="a" style="left:3px;top:197px;width:1585px;height:163px;background:#fff;border:1px solid #9c9c9c;border-left-color:#b4bcc8;border-right-color:#aab4c0;border-bottom-color:#aab4c0"></div>
<div class="a" style="left:123px;top:204px;width:1345px;height:21px;background:linear-gradient(#e9eaee,#e2e3e8 55%,#d3d4da);border:1px solid #77787c"></div>
<div class="cal c" style="left:123px;top:206px;width:168px">janeiro de 2021</div>
<div class="cal c" style="left:141px;top:225px;width:20px">D</div>
<div class="cal c" style="left:161px;top:225px;width:20px">S</div>
<div class="cal c" style="left:181px;top:225px;width:20px">T</div>
<div class="cal c" style="left:201px;top:225px;width:20px">Q</div>
<div class="cal c" style="left:221px;top:225px;width:20px">Q</div>
<div class="cal c" style="left:241px;top:225px;width:20px">S</div>
<div class="cal c" style="left:261px;top:225px;width:20px">S</div>
<div class="a" style="left:137px;top:242px;width:141px;height:1px;background:#000"></div>
<div class="cal r gr" style="left:136px;top:245px;width:20px;">27</div>
<div class="cal r gr" style="left:156px;top:245px;width:20px;">28</div>
<div class="cal r gr" style="left:176px;top:245px;width:20px;">29</div>
<div class="cal r gr" style="left:196px;top:245px;width:20px;">30</div>
<div class="cal r gr" style="left:216px;top:245px;width:20px;">31</div>
<div class="cal r gr" style="left:236px;top:245px;width:20px;">1</div>
<div class="cal r gr" style="left:256px;top:245px;width:20px;">2</div>
<div class="cal r gr" style="left:136px;top:263px;width:20px;">3</div>
<div class="cal r gr" style="left:156px;top:263px;width:20px;">4</div>
<div class="cal r gr" style="left:176px;top:263px;width:20px;">5</div>
<div class="cal r gr" style="left:196px;top:263px;width:20px;">6</div>
<div class="cal r gr" style="left:216px;top:263px;width:20px;">7</div>
<div class="cal r gr" style="left:236px;top:263px;width:20px;">8</div>
<div class="cal r gr" style="left:256px;top:263px;width:20px;">9</div>
<div class="cal r gr" style="left:136px;top:281px;width:20px;">10</div>
<div class="cal r gr" style="left:156px;top:281px;width:20px;">11</div>
<div class="cal r gr" style="left:176px;top:281px;width:20px;">12</div>
<div class="cal r gr" style="left:196px;top:281px;width:20px;">13</div>
<div class="a" style="left:219px;top:281px;width:20px;height:17px;border:1px solid #c89b58;border-radius:3px;background:linear-gradient(#fbe2b6,#f5b45f 60%,#fbd596)"></div>
<div class="cal r gr" style="left:216px;top:281px;width:20px;color:#000;">14</div>
<div class="a" style="left:240px;top:281px;width:20px;height:17px;border:1px solid #e3d58f;border-radius:3px;background:#fdf7cf"></div>
<div class="cal r gn" style="left:236px;top:281px;width:20px;font-weight:bold;text-decoration:underline;">15</div>
<div class="cal r gr" style="left:256px;top:281px;width:20px;">16</div>
<div class="cal r gr" style="left:136px;top:299px;width:20px;">17</div>
<div class="cal r gn" style="left:156px;top:299px;width:20px;">18</div>
<div class="cal r gn" style="left:176px;top:299px;width:20px;">19</div>
<div class="cal r gn" style="left:196px;top:299px;width:20px;">20</div>
<div class="cal r gn" style="left:216px;top:299px;width:20px;">21</div>
<div class="cal r gn" style="left:236px;top:299px;width:20px;">22</div>
<div class="cal r gr" style="left:256px;top:299px;width:20px;">23</div>
<div class="cal r gr" style="left:136px;top:317px;width:20px;">24</div>
<div class="cal r gn" style="left:156px;top:317px;width:20px;">25</div>
<div class="cal r gn" style="left:176px;top:317px;width:20px;">26</div>
<div class="cal r gn" style="left:196px;top:317px;width:20px;">27</div>
<div class="cal r gn" style="left:216px;top:317px;width:20px;">28</div>
<div class="cal r gn" style="left:236px;top:317px;width:20px;">29</div>
<div class="cal r gr" style="left:256px;top:317px;width:20px;">30</div>
<div class="cal r gr" style="left:136px;top:335px;width:20px;">31</div>
<div class="a" style="left:291px;top:205px;width:1px;height:19px;background:#85868a"></div>
<div class="cal c" style="left:291px;top:206px;width:168px">fevereiro de 2021</div>
<div class="cal c" style="left:309px;top:225px;width:20px">D</div>
<div class="cal c" style="left:329px;top:225px;width:20px">S</div>
<div class="cal c" style="left:349px;top:225px;width:20px">T</div>
<div class="cal c" style="left:369px;top:225px;width:20px">Q</div>
<div class="cal c" style="left:389px;top:225px;width:20px">Q</div>
<div class="cal c" style="left:409px;top:225px;width:20px">S</div>
<div class="cal c" style="left:429px;top:225px;width:20px">S</div>
<div class="a" style="left:305px;top:242px;width:141px;height:1px;background:#000"></div>
<div class="cal r gn" style="left:324px;top:245px;width:20px;">1</div>
<div class="cal r gn" style="left:344px;top:245px;width:20px;">2</div>
<div class="cal r gn" style="left:364px;top:245px;width:20px;">3</div>
<div class="cal r gn" style="left:384px;top:245px;width:20px;">4</div>
<div class="cal r gn" style="left:404px;top:245px;width:20px;">5</div>
<div class="cal r gr" style="left:424px;top:245px;width:20px;">6</div>
<div class="cal r gr" style="left:304px;top:263px;width:20px;">7</div>
<div class="cal r gn" style="left:324px;top:263px;width:20px;">8</div>
<div class="cal r gn" style="left:344px;top:263px;width:20px;">9</div>
<div class="cal r gn" style="left:364px;top:263px;width:20px;">10</div>
<div class="cal r gn" style="left:384px;top:263px;width:20px;">11</div>
<div class="cal r gn" style="left:404px;top:263px;width:20px;">12</div>
<div class="cal r gr" style="left:424px;top:263px;width:20px;">13</div>
<div class="cal r gr" style="left:304px;top:281px;width:20px;">14</div>
<div class="cal r gn" style="left:324px;top:281px;width:20px;">15</div>
<div class="cal r gn" style="left:344px;top:281px;width:20px;">16</div>
<div class="cal r gn" style="left:364px;top:281px;width:20px;">17</div>
<div class="cal r gn" style="left:384px;top:281px;width:20px;">18</div>
<div class="cal r gn" style="left:404px;top:281px;width:20px;">19</div>
<div class="cal r gr" style="left:424px;top:281px;width:20px;">20</div>
<div class="cal r gr" style="left:304px;top:299px;width:20px;">21</div>
<div class="cal r gn" style="left:324px;top:299px;width:20px;">22</div>
<div class="cal r gn" style="left:344px;top:299px;width:20px;">23</div>
<div class="cal r gn" style="left:364px;top:299px;width:20px;">24</div>
<div class="cal r gn" style="left:384px;top:299px;width:20px;">25</div>
<div class="cal r gn" style="left:404px;top:299px;width:20px;">26</div>
<div class="cal r gr" style="left:424px;top:299px;width:20px;">27</div>
<div class="cal r gr" style="left:304px;top:317px;width:20px;">28</div>
<div class="a" style="left:459px;top:205px;width:1px;height:19px;background:#85868a"></div>
<div class="cal c" style="left:459px;top:206px;width:168px">março de 2021</div>
<div class="cal c" style="left:477px;top:225px;width:20px">D</div>
<div class="cal c" style="left:497px;top:225px;width:20px">S</div>
<div class="cal c" style="left:517px;top:225px;width:20px">T</div>
<div class="cal c" style="left:537px;top:225px;width:20px">Q</div>
<div class="cal c" style="left:557px;top:225px;width:20px">Q</div>
<div class="cal c" style="left:577px;top:225px;width:20px">S</div>
<div class="cal c" style="left:597px;top:225px;width:20px">S</div>
<div class="a" style="left:473px;top:242px;width:141px;height:1px;background:#000"></div>
<div class="cal r gn" style="left:492px;top:245px;width:20px;">1</div>
<div class="cal r gn" style="left:512px;top:245px;width:20px;">2</div>
<div class="cal r gn" style="left:532px;top:245px;width:20px;">3</div>
<div class="cal r gn" style="left:552px;top:245px;width:20px;">4</div>
<div class="cal r gn" style="left:572px;top:245px;width:20px;">5</div>
<div class="cal r gr" style="left:592px;top:245px;width:20px;">6</div>
<div class="cal r gr" style="left:472px;top:263px;width:20px;">7</div>
<div class="cal r gn" style="left:492px;top:263px;width:20px;">8</div>
<div class="cal r gn" style="left:512px;top:263px;width:20px;">9</div>
<div class="cal r gn" style="left:532px;top:263px;width:20px;">10</div>
<div class="cal r gn" style="left:552px;top:263px;width:20px;">11</div>
<div class="cal r gn" style="left:572px;top:263px;width:20px;">12</div>
<div class="cal r gr" style="left:592px;top:263px;width:20px;">13</div>
<div class="cal r gr" style="left:472px;top:281px;width:20px;">14</div>
<div class="cal r gn" style="left:492px;top:281px;width:20px;">15</div>
<div class="cal r gn" style="left:512px;top:281px;width:20px;">16</div>
<div class="cal r gn" style="left:532px;top:281px;width:20px;">17</div>
<div class="cal r gn" style="left:552px;top:281px;width:20px;">18</div>
<div class="cal r gn" style="left:572px;top:281px;width:20px;">19</div>
<div class="cal r gr" style="left:592px;top:281px;width:20px;">20</div>
<div class="cal r gr" style="left:472px;top:299px;width:20px;">21</div>
<div class="cal r gn" style="left:492px;top:299px;width:20px;">22</div>
<div class="cal r gn" style="left:512px;top:299px;width:20px;">23</div>
<div class="cal r gn" style="left:532px;top:299px;width:20px;">24</div>
<div class="cal r gn" style="left:552px;top:299px;width:20px;">25</div>
<div class="cal r gn" style="left:572px;top:299px;width:20px;">26</div>
<div class="cal r gr" style="left:592px;top:299px;width:20px;">27</div>
<div class="cal r gr" style="left:472px;top:317px;width:20px;">28</div>
<div class="cal r gn" style="left:492px;top:317px;width:20px;">29</div>
<div class="cal r gn" style="left:512px;top:317px;width:20px;">30</div>
<div class="cal r gn" style="left:532px;top:317px;width:20px;">31</div>
<div class="a" style="left:627px;top:205px;width:1px;height:19px;background:#85868a"></div>
<div class="cal c" style="left:627px;top:206px;width:168px">abril de 2021</div>
<div class="cal c" style="left:645px;top:225px;width:20px">D</div>
<div class="cal c" style="left:665px;top:225px;width:20px">S</div>
<div class="cal c" style="left:685px;top:225px;width:20px">T</div>
<div class="cal c" style="left:705px;top:225px;width:20px">Q</div>
<div class="cal c" style="left:725px;top:225px;width:20px">Q</div>
<div class="cal c" style="left:745px;top:225px;width:20px">S</div>
<div class="cal c" style="left:765px;top:225px;width:20px">S</div>
<div class="a" style="left:641px;top:242px;width:141px;height:1px;background:#000"></div>
<div class="cal r gn" style="left:720px;top:245px;width:20px;">1</div>
<div class="cal r gn" style="left:740px;top:245px;width:20px;">2</div>
<div class="cal r gr" style="left:760px;top:245px;width:20px;">3</div>
<div class="cal r gr" style="left:640px;top:263px;width:20px;">4</div>
<div class="cal r gn" style="left:660px;top:263px;width:20px;">5</div>
<div class="cal r gn" style="left:680px;top:263px;width:20px;">6</div>
<div class="cal r gn" style="left:700px;top:263px;width:20px;">7</div>
<div class="cal r gn" style="left:720px;top:263px;width:20px;">8</div>
<div class="cal r gn" style="left:740px;top:263px;width:20px;">9</div>
<div class="cal r gr" style="left:760px;top:263px;width:20px;">10</div>
<div class="cal r gr" style="left:640px;top:281px;width:20px;">11</div>
<div class="cal r gn" style="left:660px;top:281px;width:20px;">12</div>
<div class="cal r gn" style="left:680px;top:281px;width:20px;">13</div>
<div class="cal r gn" style="left:700px;top:281px;width:20px;">14</div>
<div class="cal r gn" style="left:720px;top:281px;width:20px;">15</div>
<div class="cal r gn" style="left:740px;top:281px;width:20px;">16</div>
<div class="cal r gr" style="left:760px;top:281px;width:20px;">17</div>
<div class="cal r gr" style="left:640px;top:299px;width:20px;">18</div>
<div class="cal r gn" style="left:660px;top:299px;width:20px;">19</div>
<div class="cal r gn" style="left:680px;top:299px;width:20px;">20</div>
<div class="cal r gn" style="left:700px;top:299px;width:20px;">21</div>
<div class="cal r gn" style="left:720px;top:299px;width:20px;">22</div>
<div class="cal r gn" style="left:740px;top:299px;width:20px;">23</div>
<div class="cal r gr" style="left:760px;top:299px;width:20px;">24</div>
<div class="cal r gr" style="left:640px;top:317px;width:20px;">25</div>
<div class="cal r gn" style="left:660px;top:317px;width:20px;">26</div>
<div class="cal r gn" style="left:680px;top:317px;width:20px;">27</div>
<div class="cal r gn" style="left:700px;top:317px;width:20px;">28</div>
<div class="cal r gn" style="left:720px;top:317px;width:20px;">29</div>
<div class="cal r gn" style="left:740px;top:317px;width:20px;">30</div>
<div class="a" style="left:795px;top:205px;width:1px;height:19px;background:#85868a"></div>
<div class="cal c" style="left:795px;top:206px;width:168px">maio de 2021</div>
<div class="cal c" style="left:813px;top:225px;width:20px">D</div>
<div class="cal c" style="left:833px;top:225px;width:20px">S</div>
<div class="cal c" style="left:853px;top:225px;width:20px">T</div>
<div class="cal c" style="left:873px;top:225px;width:20px">Q</div>
<div class="cal c" style="left:893px;top:225px;width:20px">Q</div>
<div class="cal c" style="left:913px;top:225px;width:20px">S</div>
<div class="cal c" style="left:933px;top:225px;width:20px">S</div>
<div class="a" style="left:809px;top:242px;width:141px;height:1px;background:#000"></div>
<div class="cal r gr" style="left:928px;top:245px;width:20px;">1</div>
<div class="cal r gr" style="left:808px;top:263px;width:20px;">2</div>
<div class="cal r gn" style="left:828px;top:263px;width:20px;">3</div>
<div class="cal r gn" style="left:848px;top:263px;width:20px;">4</div>
<div class="cal r gn" style="left:868px;top:263px;width:20px;">5</div>
<div class="cal r gn" style="left:888px;top:263px;width:20px;">6</div>
<div class="cal r gn" style="left:908px;top:263px;width:20px;">7</div>
<div class="cal r gr" style="left:928px;top:263px;width:20px;">8</div>
<div class="cal r gr" style="left:808px;top:281px;width:20px;">9</div>
<div class="cal r gn" style="left:828px;top:281px;width:20px;">10</div>
<div class="cal r gn" style="left:848px;top:281px;width:20px;">11</div>
<div class="cal r gn" style="left:868px;top:281px;width:20px;">12</div>
<div class="cal r gn" style="left:888px;top:281px;width:20px;">13</div>
<div class="cal r gn" style="left:908px;top:281px;width:20px;">14</div>
<div class="cal r gr" style="left:928px;top:281px;width:20px;">15</div>
<div class="cal r gr" style="left:808px;top:299px;width:20px;">16</div>
<div class="cal r gr" style="left:828px;top:299px;width:20px;">17</div>
<div class="cal r gr" style="left:848px;top:299px;width:20px;">18</div>
<div class="cal r gr" style="left:868px;top:299px;width:20px;">19</div>
<div class="cal r gr" style="left:888px;top:299px;width:20px;">20</div>
<div class="cal r gr" style="left:908px;top:299px;width:20px;">21</div>
<div class="cal r gr" style="left:928px;top:299px;width:20px;">22</div>
<div class="cal r gr" style="left:808px;top:317px;width:20px;">23</div>
<div class="cal r gr" style="left:828px;top:317px;width:20px;">24</div>
<div class="cal r gr" style="left:848px;top:317px;width:20px;">25</div>
<div class="cal r gr" style="left:868px;top:317px;width:20px;">26</div>
<div class="cal r gr" style="left:888px;top:317px;width:20px;">27</div>
<div class="cal r gr" style="left:908px;top:317px;width:20px;">28</div>
<div class="cal r gr" style="left:928px;top:317px;width:20px;">29</div>
<div class="cal r gr" style="left:808px;top:335px;width:20px;">30</div>
<div class="cal r gr" style="left:828px;top:335px;width:20px;">31</div>
<div class="a" style="left:963px;top:205px;width:1px;height:19px;background:#85868a"></div>
<div class="cal c" style="left:963px;top:206px;width:168px">junho de 2021</div>
<div class="cal c" style="left:981px;top:225px;width:20px">D</div>
<div class="cal c" style="left:1001px;top:225px;width:20px">S</div>
<div class="cal c" style="left:1021px;top:225px;width:20px">T</div>
<div class="cal c" style="left:1041px;top:225px;width:20px">Q</div>
<div class="cal c" style="left:1061px;top:225px;width:20px">Q</div>
<div class="cal c" style="left:1081px;top:225px;width:20px">S</div>
<div class="cal c" style="left:1101px;top:225px;width:20px">S</div>
<div class="a" style="left:977px;top:242px;width:141px;height:1px;background:#000"></div>
<div class="cal r gr" style="left:1016px;top:245px;width:20px;">1</div>
<div class="cal r gr" style="left:1036px;top:245px;width:20px;">2</div>
<div class="cal r gr" style="left:1056px;top:245px;width:20px;">3</div>
<div class="cal r gr" style="left:1076px;top:245px;width:20px;">4</div>
<div class="cal r gr" style="left:1096px;top:245px;width:20px;">5</div>
<div class="cal r gr" style="left:976px;top:263px;width:20px;">6</div>
<div class="cal r gr" style="left:996px;top:263px;width:20px;">7</div>
<div class="cal r gr" style="left:1016px;top:263px;width:20px;">8</div>
<div class="cal r gr" style="left:1036px;top:263px;width:20px;">9</div>
<div class="cal r gr" style="left:1056px;top:263px;width:20px;">10</div>
<div class="cal r gr" style="left:1076px;top:263px;width:20px;">11</div>
<div class="cal r gr" style="left:1096px;top:263px;width:20px;">12</div>
<div class="cal r gr" style="left:976px;top:281px;width:20px;">13</div>
<div class="cal r gr" style="left:996px;top:281px;width:20px;">14</div>
<div class="cal r gr" style="left:1016px;top:281px;width:20px;">15</div>
<div class="cal r gr" style="left:1036px;top:281px;width:20px;">16</div>
<div class="cal r gr" style="left:1056px;top:281px;width:20px;">17</div>
<div class="cal r gr" style="left:1076px;top:281px;width:20px;">18</div>
<div class="cal r gr" style="left:1096px;top:281px;width:20px;">19</div>
<div class="cal r gr" style="left:976px;top:299px;width:20px;">20</div>
<div class="cal r gr" style="left:996px;top:299px;width:20px;">21</div>
<div class="cal r gr" style="left:1016px;top:299px;width:20px;">22</div>
<div class="cal r gr" style="left:1036px;top:299px;width:20px;">23</div>
<div class="cal r gr" style="left:1056px;top:299px;width:20px;">24</div>
<div class="cal r gr" style="left:1076px;top:299px;width:20px;">25</div>
<div class="cal r gr" style="left:1096px;top:299px;width:20px;">26</div>
<div class="cal r gr" style="left:976px;top:317px;width:20px;">27</div>
<div class="cal r gr" style="left:996px;top:317px;width:20px;">28</div>
<div class="cal r gr" style="left:1016px;top:317px;width:20px;">29</div>
<div class="cal r gr" style="left:1036px;top:317px;width:20px;">30</div>
<div class="a" style="left:1131px;top:205px;width:1px;height:19px;background:#85868a"></div>
<div class="cal c" style="left:1131px;top:206px;width:168px">julho de 2021</div>
<div class="cal c" style="left:1149px;top:225px;width:20px">D</div>
<div class="cal c" style="left:1169px;top:225px;width:20px">S</div>
<div class="cal c" style="left:1189px;top:225px;width:20px">T</div>
<div class="cal c" style="left:1209px;top:225px;width:20px">Q</div>
<div class="cal c" style="left:1229px;top:225px;width:20px">Q</div>
<div class="cal c" style="left:1249px;top:225px;width:20px">S</div>
<div class="cal c" style="left:1269px;top:225px;width:20px">S</div>
<div class="a" style="left:1145px;top:242px;width:141px;height:1px;background:#000"></div>
<div class="cal r gr" style="left:1224px;top:245px;width:20px;">1</div>
<div class="cal r gr" style="left:1244px;top:245px;width:20px;">2</div>
<div class="cal r gr" style="left:1264px;top:245px;width:20px;">3</div>
<div class="cal r gr" style="left:1144px;top:263px;width:20px;">4</div>
<div class="cal r gr" style="left:1164px;top:263px;width:20px;">5</div>
<div class="cal r gr" style="left:1184px;top:263px;width:20px;">6</div>
<div class="cal r gr" style="left:1204px;top:263px;width:20px;">7</div>
<div class="cal r gr" style="left:1224px;top:263px;width:20px;">8</div>
<div class="cal r gr" style="left:1244px;top:263px;width:20px;">9</div>
<div class="cal r gr" style="left:1264px;top:263px;width:20px;">10</div>
<div class="cal r gr" style="left:1144px;top:281px;width:20px;">11</div>
<div class="cal r gr" style="left:1164px;top:281px;width:20px;">12</div>
<div class="cal r gr" style="left:1184px;top:281px;width:20px;">13</div>
<div class="cal r gr" style="left:1204px;top:281px;width:20px;">14</div>
<div class="cal r gr" style="left:1224px;top:281px;width:20px;">15</div>
<div class="cal r gr" style="left:1244px;top:281px;width:20px;">16</div>
<div class="cal r gr" style="left:1264px;top:281px;width:20px;">17</div>
<div class="cal r gr" style="left:1144px;top:299px;width:20px;">18</div>
<div class="cal r gr" style="left:1164px;top:299px;width:20px;">19</div>
<div class="cal r gr" style="left:1184px;top:299px;width:20px;">20</div>
<div class="cal r gr" style="left:1204px;top:299px;width:20px;">21</div>
<div class="cal r gr" style="left:1224px;top:299px;width:20px;">22</div>
<div class="cal r gr" style="left:1244px;top:299px;width:20px;">23</div>
<div class="cal r gr" style="left:1264px;top:299px;width:20px;">24</div>
<div class="cal r gr" style="left:1144px;top:317px;width:20px;">25</div>
<div class="cal r gr" style="left:1164px;top:317px;width:20px;">26</div>
<div class="cal r gr" style="left:1184px;top:317px;width:20px;">27</div>
<div class="cal r gr" style="left:1204px;top:317px;width:20px;">28</div>
<div class="cal r gr" style="left:1224px;top:317px;width:20px;">29</div>
<div class="cal r gr" style="left:1244px;top:317px;width:20px;">30</div>
<div class="cal r gr" style="left:1264px;top:317px;width:20px;">31</div>
<div class="a" style="left:1299px;top:205px;width:1px;height:19px;background:#85868a"></div>
<div class="cal c" style="left:1299px;top:206px;width:168px">agosto de 2021</div>
<div class="cal c" style="left:1317px;top:225px;width:20px">D</div>
<div class="cal c" style="left:1337px;top:225px;width:20px">S</div>
<div class="cal c" style="left:1357px;top:225px;width:20px">T</div>
<div class="cal c" style="left:1377px;top:225px;width:20px">Q</div>
<div class="cal c" style="left:1397px;top:225px;width:20px">Q</div>
<div class="cal c" style="left:1417px;top:225px;width:20px">S</div>
<div class="cal c" style="left:1437px;top:225px;width:20px">S</div>
<div class="a" style="left:1313px;top:242px;width:141px;height:1px;background:#000"></div>
<div class="cal r gr" style="left:1312px;top:245px;width:20px;">1</div>
<div class="cal r gr" style="left:1332px;top:245px;width:20px;">2</div>
<div class="cal r gr" style="left:1352px;top:245px;width:20px;">3</div>
<div class="cal r gr" style="left:1372px;top:245px;width:20px;">4</div>
<div class="cal r gr" style="left:1392px;top:245px;width:20px;">5</div>
<div class="cal r gr" style="left:1412px;top:245px;width:20px;">6</div>
<div class="cal r gr" style="left:1432px;top:245px;width:20px;">7</div>
<div class="cal r gr" style="left:1312px;top:263px;width:20px;">8</div>
<div class="cal r gr" style="left:1332px;top:263px;width:20px;">9</div>
<div class="cal r gr" style="left:1352px;top:263px;width:20px;">10</div>
<div class="cal r gr" style="left:1372px;top:263px;width:20px;">11</div>
<div class="cal r gr" style="left:1392px;top:263px;width:20px;">12</div>
<div class="cal r gr" style="left:1412px;top:263px;width:20px;">13</div>
<div class="cal r gr" style="left:1432px;top:263px;width:20px;">14</div>
<div class="cal r gr" style="left:1312px;top:281px;width:20px;">15</div>
<div class="cal r gr" style="left:1332px;top:281px;width:20px;">16</div>
<div class="cal r gr" style="left:1352px;top:281px;width:20px;">17</div>
<div class="cal r gr" style="left:1372px;top:281px;width:20px;">18</div>
<div class="cal r gr" style="left:1392px;top:281px;width:20px;">19</div>
<div class="cal r gr" style="left:1412px;top:281px;width:20px;">20</div>
<div class="cal r gr" style="left:1432px;top:281px;width:20px;">21</div>
<div class="cal r gr" style="left:1312px;top:299px;width:20px;">22</div>
<div class="cal r gr" style="left:1332px;top:299px;width:20px;">23</div>
<div class="cal r gr" style="left:1352px;top:299px;width:20px;">24</div>
<div class="cal r gr" style="left:1372px;top:299px;width:20px;">25</div>
<div class="cal r gr" style="left:1392px;top:299px;width:20px;">26</div>
<div class="cal r gr" style="left:1412px;top:299px;width:20px;">27</div>
<div class="cal r gr" style="left:1432px;top:299px;width:20px;">28</div>
<div class="cal r gr" style="left:1312px;top:317px;width:20px;">29</div>
<div class="cal r gr" style="left:1332px;top:317px;width:20px;">30</div>
<div class="cal r gr" style="left:1352px;top:317px;width:20px;">31</div>
<div class="cal r gr" style="left:1372px;top:317px;width:20px;">1</div>
<div class="cal r gr" style="left:1392px;top:317px;width:20px;">2</div>
<div class="cal r gr" style="left:1412px;top:317px;width:20px;">3</div>
<div class="cal r gr" style="left:1432px;top:317px;width:20px;">4</div>
<div class="cal r gr" style="left:1312px;top:335px;width:20px;">5</div>
<div class="cal r gr" style="left:1332px;top:335px;width:20px;">6</div>
<div class="cal r gr" style="left:1352px;top:335px;width:20px;">7</div>
<div class="cal r gr" style="left:1372px;top:335px;width:20px;">8</div>
<div class="cal r gr" style="left:1392px;top:335px;width:20px;">9</div>
<div class="cal r gr" style="left:1412px;top:335px;width:20px;">10</div>
<div class="cal r gr" style="left:1432px;top:335px;width:20px;">11</div>
<div class="a" style="left:130px;top:209px;border:5px solid transparent;border-right:6px solid #000;border-left:0"></div>
<div class="a" style="left:1454px;top:209px;border:5px solid transparent;border-left:6px solid #000;border-right:0"></div>
<div class="a" style="left:1588px;top:198px;width:75px;height:163px;background:#fff"></div>
<div class="t " style="left:1592px;top:198px;">Legenda</div>
<div class="t " style="left:1605px;top:214px;">Não Atende</div>
<div class="t " style="left:1605px;top:229px;">Livre</div>
<div class="t " style="left:1606px;top:241px;">Ocupada</div>
<svg class="a" style="left:1591px;top:217px" width="10" height="10" viewBox="0 0 10 10"><circle cx="5" cy="5" r="3.600" fill="#8a8a8a"/><path d="M5 .5v9M.5 5h9M1.800 1.800l6.400 6.400M8.200 1.800l-6.400 6.400" stroke="#8a8a8a" stroke-width="1.400"/></svg>
<svg class="a" style="left:1591px;top:232px" width="10" height="10" viewBox="0 0 10 10"><circle cx="5" cy="5" r="3.600" fill="#0a8a0a"/><path d="M5 .5v9M.5 5h9M1.800 1.800l6.400 6.400M8.200 1.800l-6.400 6.400" stroke="#0a8a0a" stroke-width="1.400"/></svg>
<svg class="a" style="left:1591px;top:244px" width="10" height="10" viewBox="0 0 10 10"><circle cx="5" cy="5" r="3.600" fill="#7d0d0d"/><path d="M5 .5v9M.5 5h9M1.800 1.800l6.400 6.400M8.200 1.800l-6.400 6.400" stroke="#7d0d0d" stroke-width="1.400"/></svg>
<div class="a" style="left:1663px;top:205px;width:250px;height:155px;border:1px solid #dcdcdc"></div>
<div class="a" style="left:1668px;top:198px;width:90px;height:14px;background:#f0f0f0"></div>
<div class="t b" style="left:1671px;top:197px;">Opções Extras</div>
<div class="btn" style="left:1666px;top:217px;width:115px;height:21px;"></div>
<div class="t b c" style="left:1680px;top:220px;width:101px;">Recepção</div>
<div class="btn" style="left:1783px;top:217px;width:128px;height:21px;"></div>
<div class="t c b" style="left:1783px;top:219.5px;width:128px;">Meus Proc. em Aberto</div>
<div class="btn" style="left:1666px;top:240px;width:130px;height:21px;"></div>
<div class="t b" style="left:1684px;top:243px;">Chamar Senha (F8)</div>
<div class="btn" style="left:1798px;top:240px;width:113px;height:21px;"></div>
<div class="t b" style="left:1814px;top:243px;">Chamar Paciente</div>
<div class="btn" style="left:1666px;top:264px;width:245px;height:22px;"></div>
<div class="t b c" style="left:1678px;top:267px;width:233px;">Atestados</div>
<div class="btn" style="left:1666px;top:289px;width:245px;height:22px;"></div>
<div class="t b c" style="left:1666px;top:292px;width:228px;">Atendimentos (Ficha Médica)</div>
<div class="a" style="left:1897px;top:291px;width:1px;height:17px;background:#6d6d6d"></div><div class="a" style="left:1899px;top:298px;border:4px solid transparent;border-top:5px solid #000;border-bottom:0"></div>
<div class="btn" style="left:1666px;top:313px;width:130px;height:21px;"></div>
<div class="t c b" style="left:1666px;top:315.5px;width:130px;">Triagem</div>
<div class="btn" style="left:1798px;top:313px;width:113px;height:21px;"></div>
<div class="t b" style="left:1824px;top:316px;">Imp. Etiqueta</div>
<div class="btn" style="left:1666px;top:336px;width:245px;height:21px;"></div>
<div class="t c b" style="left:1666px;top:338.5px;width:245px;">Lançar Procedimentos (Exames)</div>
<svg class="a" style="left:1668px;top:219px" width="16" height="16" viewBox="0 0 32 32"><defs><linearGradient id="j1a" x1="0" y1="0" x2="0" y2="1"><stop offset="0" stop-color="#fde9a4"/><stop offset="1" stop-color="#efc558"/></linearGradient><linearGradient id="j1b" x1="0" y1="0" x2="0" y2="1"><stop offset="0" stop-color="#fafafa"/><stop offset="1" stop-color="#c4c4c4"/></linearGradient></defs><path d="M3 2.500h10.500l2 2H27v20H3z" fill="#e6bd55"/><path d="M5 4.500h21v7H5z" fill="#f6f6f6" stroke="#c8c8c8" stroke-width=".4"/><path d="M17.500 1.500h4v4h-4z" fill="#fafafa" stroke="#7aa0d8" stroke-width=".5"/><path d="M3.500 8h23.500l1.500 17H3z" fill="url(#j1a)" stroke="#d3a53c" stroke-width=".5"/><path d="M24 22l7 .5-4 4.500h-8z" fill="#f6f6f6" stroke="#ddd" stroke-width=".4"/><ellipse cx="6.500" cy="23.500" rx="6" ry="5" fill="url(#j1b)"/><ellipse cx="6.500" cy="14" rx="3.400" ry="4.200" fill="#f1cda6"/><path d="M3 13c-.5-5 7.500-5 7 0-1.500-2-5.500-2-7 0z" fill="#80562f"/><path d="M11 25c-1.500-9.500 1-13.500 6-13.500s7.500 4 6 13.500z" fill="#1b1310"/><ellipse cx="17" cy="19" rx="3.300" ry="4.200" fill="#c58b63"/><ellipse cx="17" cy="28" rx="7" ry="4.300" fill="#f1e3e3" stroke="#d4c4c4" stroke-width=".4"/><path d="M14.500 24l2.500 3 2.500-3z" fill="#b57a55"/></svg>
<svg class="a" style="left:1669px;top:244px" width="14" height="14" viewBox="0 0 14 14"><path d="M1 5l5-3 4 2-5 3z" fill="#9fd0ff"/><path d="M1 5l4 2v6l-4-2z" fill="#2f8fef"/><path d="M5 7l5-3v6l-5 3z" fill="#1f78e0"/><path d="M9 3l4 3-4 4z" fill="#2f8fef"/></svg>
<svg class="a" style="left:1801px;top:244px" width="14" height="14" viewBox="0 0 14 14"><path d="M1 5l5-3 4 2-5 3z" fill="#9fd0ff"/><path d="M1 5l4 2v6l-4-2z" fill="#2f8fef"/><path d="M5 7l5-3v6l-5 3z" fill="#1f78e0"/><path d="M9 3l4 3-4 4z" fill="#2f8fef"/></svg>
<svg class="a" style="left:1670px;top:266px" width="14" height="17" viewBox="0 0 14 17"><path d="M1.500 2.500l8-2 3 1v13l-8 2-3-1z" fill="#f4f4f4" stroke="#777"/><path d="M3 6l7-1.500M3 8.500l7-1.500M3 11l7-1.500" stroke="#aaa"/></svg>
<svg class="a" style="left:1801px;top:316px" width="15" height="13" viewBox="0 0 15 13"><path d="M4 1h6l1 4H3z" fill="#eee" stroke="#666"/><path d="M1 5h13v5H1z" fill="#777"/><path d="M3 8h9v4H3z" fill="#ddd" stroke="#666"/></svg>
<div class="a" style="left:3px;top:360px;width:1911px;height:30px;border-right:2px solid #9c9c9c"></div>
<div class="a" style="left:5px;top:368px;width:13px;height:13px;background:#fff;border:1px solid #333"></div>
<svg class="a" style="left:5px;top:368px" width="13" height="13" viewBox="0 0 13 13"><path d="M2.500 6.500l3 3 5.500-7" stroke="#222" stroke-width="1.100" fill="none"/></svg>
<div class="t " style="left:21px;top:367px;">Mostrar Todos os Horários</div>
<div class="a" style="left:150px;top:368px;width:13px;height:13px;background:#fff;border:1px solid #333"></div>
<div class="t " style="left:166px;top:367px;">Agendamentos de outras unidades</div>
<div class="btn" style="left:336px;top:363px;width:140px;height:24px;"></div>
<div class="t c " style="left:336px;top:367.5px;width:140px;">Observação do Dia</div>
<div class="t b" style="left:822px;top:361px;color:#f00;letter-spacing:.6px">15/01/2021 Sexta-feira - Agendado(s): 04 - Bloqueado(s): 00 - Encaixado(s): 00 - Vaga(s) Livre(s): 16 - Taxa de Ocupação: 23,81%</div>
<div class="a" style="left:5px;top:390px;width:1908px;height:577px;border:1px solid #70737c;border-right-color:#9a9da6;border-bottom:2px solid #8d93a0"></div>
<div class="hd" style="left:6px;width:11px"></div>
<div class="hd" style="left:17px;width:64px"></div>
<div class="t " style="left:21px;top:392px;">Prioridade</div>
<div class="hd" style="left:81px;width:51px"></div>
<div class="t " style="left:85px;top:392px;">Hora</div>
<div class="hd" style="left:132px;width:174px"></div>
<div class="t " style="left:136px;top:392px;">Situação (Status)</div>
<div class="hd" style="left:306px;width:184px"></div>
<div class="t " style="left:310px;top:392px;">Convênio</div>
<div class="hd" style="left:490px;width:64px"></div>
<div class="t " style="left:494px;top:392px;">Nro. Ficha</div>
<div class="hd" style="left:554px;width:321px"></div>
<div class="t " style="left:558px;top:392px;">Nome do Paciente</div>
<div class="hd" style="left:875px;width:85px"></div>
<div class="t " style="left:879px;top:392px;">Dt. Nascimento</div>
<div class="hd" style="left:960px;width:175px"></div>
<div class="t " style="left:964px;top:392px;">Médico</div>
<div class="hd" style="left:1135px;width:123px"></div>
<div class="t " style="left:1139px;top:392px;">Observações</div>
<div class="hd" style="left:1258px;width:91px"></div>
<div class="t " style="left:1262px;top:392px;">Confirma</div>
<div class="hd" style="left:1349px;width:111px"></div>
<div class="t " style="left:1353px;top:392px;">Hora do Atendimento</div>
<div class="hd" style="left:1460px;width:300px"></div>
<div class="t " style="left:1464px;top:392px;">Exames</div>
<div class="hd" style="left:1760px;width:153px"></div>
<div class="t " style="left:1764px;top:392px;">Data e Hora da inclusão</div>
<svg class="a" style="left:7px;top:397px" width="8" height="8" viewBox="0 0 8 8"><path d="M3.500 0v7M0 3.500h7M1 1l5 5M6 1l-5 5" stroke="#8791b4" stroke-width=".8"/></svg>
<div class="a" style="left:113px;top:396px;border:5px solid transparent;border-bottom:6px solid #55598a;border-top:0"></div>
<div class="row" style="top:411px;height:19px;background:#f3f5f4;border-bottom-color:#e6e6e6"></div>
<div class="ind" style="top:411px;height:19px"></div>
<div class="vl" style="left:80px;top:411px;height:19px;"></div>
<div class="vl" style="left:131px;top:411px;height:19px;"></div>
<div class="vl" style="left:305px;top:411px;height:19px;"></div>
<div class="vl" style="left:489px;top:411px;height:19px;"></div>
<div class="vl" style="left:553px;top:411px;height:19px;"></div>
<div class="vl" style="left:874px;top:411px;height:19px;"></div>
<div class="vl" style="left:959px;top:411px;height:19px;"></div>
<div class="vl" style="left:1134px;top:411px;height:19px;"></div>
<div class="vl" style="left:1257px;top:411px;height:19px;"></div>
<div class="vl" style="left:1348px;top:411px;height:19px;"></div>
<div class="vl" style="left:1459px;top:411px;height:19px;"></div>
<div class="vl" style="left:1759px;top:411px;height:19px;"></div>
<div class="t " style="left:83px;top:412.0px;color:#000;letter-spacing:-.1px">08:00</div>
<div class="row" style="top:430px;height:19px;background:#f3f5f4;border-bottom-color:#e6e6e6"></div>
<div class="ind" style="top:430px;height:19px"></div>
<div class="vl" style="left:80px;top:430px;height:19px;"></div>
<div class="vl" style="left:131px;top:430px;height:19px;"></div>
<div class="vl" style="left:305px;top:430px;height:19px;"></div>
<div class="vl" style="left:489px;top:430px;height:19px;"></div>
<div class="vl" style="left:553px;top:430px;height:19px;"></div>
<div class="vl" style="left:874px;top:430px;height:19px;"></div>
<div class="vl" style="left:959px;top:430px;height:19px;"></div>
<div class="vl" style="left:1134px;top:430px;height:19px;"></div>
<div class="vl" style="left:1257px;top:430px;height:19px;"></div>
<div class="vl" style="left:1348px;top:430px;height:19px;"></div>
<div class="vl" style="left:1459px;top:430px;height:19px;"></div>
<div class="vl" style="left:1759px;top:430px;height:19px;"></div>
<div class="t " style="left:83px;top:431.0px;color:#000;letter-spacing:-.1px">08:30</div>
<div class="row" style="top:449px;height:19px;background:#f3f5f4;border-bottom-color:#e6e6e6"></div>
<div class="ind" style="top:449px;height:19px"></div>
<div class="vl" style="left:80px;top:449px;height:19px;"></div>
<div class="vl" style="left:131px;top:449px;height:19px;"></div>
<div class="vl" style="left:305px;top:449px;height:19px;"></div>
<div class="vl" style="left:489px;top:449px;height:19px;"></div>
<div class="vl" style="left:553px;top:449px;height:19px;"></div>
<div class="vl" style="left:874px;top:449px;height:19px;"></div>
<div class="vl" style="left:959px;top:449px;height:19px;"></div>
<div class="vl" style="left:1134px;top:449px;height:19px;"></div>
<div class="vl" style="left:1257px;top:449px;height:19px;"></div>
<div class="vl" style="left:1348px;top:449px;height:19px;"></div>
<div class="vl" style="left:1459px;top:449px;height:19px;"></div>
<div class="vl" style="left:1759px;top:449px;height:19px;"></div>
<div class="t " style="left:83px;top:450.0px;color:#000;letter-spacing:-.1px">09:00</div>
<div class="row" style="top:468px;height:19px;background:#f3f5f4;border-bottom-color:#e6e6e6"></div>
<div class="ind" style="top:468px;height:19px"></div>
<div class="vl" style="left:80px;top:468px;height:19px;"></div>
<div class="vl" style="left:131px;top:468px;height:19px;"></div>
<div class="vl" style="left:305px;top:468px;height:19px;"></div>
<div class="vl" style="left:489px;top:468px;height:19px;"></div>
<div class="vl" style="left:553px;top:468px;height:19px;"></div>
<div class="vl" style="left:874px;top:468px;height:19px;"></div>
<div class="vl" style="left:959px;top:468px;height:19px;"></div>
<div class="vl" style="left:1134px;top:468px;height:19px;"></div>
<div class="vl" style="left:1257px;top:468px;height:19px;"></div>
<div class="vl" style="left:1348px;top:468px;height:19px;"></div>
<div class="vl" style="left:1459px;top:468px;height:19px;"></div>
<div class="vl" style="left:1759px;top:468px;height:19px;"></div>
<div class="t " style="left:83px;top:469.0px;color:#000;letter-spacing:-.1px">09:30</div>
<div class="row" style="top:487px;height:19px;background:#f3f5f4;border-bottom-color:#e6e6e6"></div>
<div class="ind" style="top:487px;height:19px"></div>
<div class="vl" style="left:80px;top:487px;height:19px;"></div>
<div class="vl" style="left:131px;top:487px;height:19px;"></div>
<div class="vl" style="left:305px;top:487px;height:19px;"></div>
<div class="vl" style="left:489px;top:487px;height:19px;"></div>
<div class="vl" style="left:553px;top:487px;height:19px;"></div>
<div class="vl" style="left:874px;top:487px;height:19px;"></div>
<div class="vl" style="left:959px;top:487px;height:19px;"></div>
<div class="vl" style="left:1134px;top:487px;height:19px;"></div>
<div class="vl" style="left:1257px;top:487px;height:19px;"></div>
<div class="vl" style="left:1348px;top:487px;height:19px;"></div>
<div class="vl" style="left:1459px;top:487px;height:19px;"></div>
<div class="vl" style="left:1759px;top:487px;height:19px;"></div>
<div class="t " style="left:83px;top:488.0px;color:#000;letter-spacing:-.1px">10:00</div>
<div class="row" style="top:506px;height:19px;background:#f3f5f4;border-bottom-color:#e6e6e6"></div>
<div class="ind" style="top:506px;height:19px"></div>
<div class="vl" style="left:80px;top:506px;height:19px;"></div>
<div class="vl" style="left:131px;top:506px;height:19px;"></div>
<div class="vl" style="left:305px;top:506px;height:19px;"></div>
<div class="vl" style="left:489px;top:506px;height:19px;"></div>
<div class="vl" style="left:553px;top:506px;height:19px;"></div>
<div class="vl" style="left:874px;top:506px;height:19px;"></div>
<div class="vl" style="left:959px;top:506px;height:19px;"></div>
<div class="vl" style="left:1134px;top:506px;height:19px;"></div>
<div class="vl" style="left:1257px;top:506px;height:19px;"></div>
<div class="vl" style="left:1348px;top:506px;height:19px;"></div>
<div class="vl" style="left:1459px;top:506px;height:19px;"></div>
<div class="vl" style="left:1759px;top:506px;height:19px;"></div>
<div class="t " style="left:83px;top:507.0px;color:#000;letter-spacing:-.1px">10:30</div>
<div class="row" style="top:525px;height:19px;background:#f3f5f4;border-bottom-color:#e6e6e6"></div>
<div class="ind" style="top:525px;height:19px"></div>
<div class="vl" style="left:80px;top:525px;height:19px;"></div>
<div class="vl" style="left:131px;top:525px;height:19px;"></div>
<div class="vl" style="left:305px;top:525px;height:19px;"></div>
<div class="vl" style="left:489px;top:525px;height:19px;"></div>
<div class="vl" style="left:553px;top:525px;height:19px;"></div>
<div class="vl" style="left:874px;top:525px;height:19px;"></div>
<div class="vl" style="left:959px;top:525px;height:19px;"></div>
<div class="vl" style="left:1134px;top:525px;height:19px;"></div>
<div class="vl" style="left:1257px;top:525px;height:19px;"></div>
<div class="vl" style="left:1348px;top:525px;height:19px;"></div>
<div class="vl" style="left:1459px;top:525px;height:19px;"></div>
<div class="vl" style="left:1759px;top:525px;height:19px;"></div>
<div class="t " style="left:83px;top:526.0px;color:#000;letter-spacing:-.1px">11:00</div>
<div class="row" style="top:544px;height:19px;background:#f3f5f4;border-bottom-color:#e6e6e6"></div>
<div class="ind" style="top:544px;height:19px"></div>
<div class="vl" style="left:80px;top:544px;height:19px;"></div>
<div class="vl" style="left:131px;top:544px;height:19px;"></div>
<div class="vl" style="left:305px;top:544px;height:19px;"></div>
<div class="vl" style="left:489px;top:544px;height:19px;"></div>
<div class="vl" style="left:553px;top:544px;height:19px;"></div>
<div class="vl" style="left:874px;top:544px;height:19px;"></div>
<div class="vl" style="left:959px;top:544px;height:19px;"></div>
<div class="vl" style="left:1134px;top:544px;height:19px;"></div>
<div class="vl" style="left:1257px;top:544px;height:19px;"></div>
<div class="vl" style="left:1348px;top:544px;height:19px;"></div>
<div class="vl" style="left:1459px;top:544px;height:19px;"></div>
<div class="vl" style="left:1759px;top:544px;height:19px;"></div>
<div class="t " style="left:83px;top:545.0px;color:#000;letter-spacing:-.1px">11:30</div>
<div class="row" style="top:563px;height:33px;background:#bbcef0;border-bottom-color:#dfe7f5"></div>
<div class="ind" style="top:563px;height:33px"></div>
<div class="vl" style="left:80px;top:563px;height:33px;background:#dfe7f5"></div>
<div class="vl" style="left:131px;top:563px;height:33px;background:#dfe7f5"></div>
<div class="vl" style="left:305px;top:563px;height:33px;background:#dfe7f5"></div>
<div class="vl" style="left:489px;top:563px;height:33px;background:#dfe7f5"></div>
<div class="vl" style="left:553px;top:563px;height:33px;background:#dfe7f5"></div>
<div class="vl" style="left:874px;top:563px;height:33px;background:#dfe7f5"></div>
<div class="vl" style="left:959px;top:563px;height:33px;background:#dfe7f5"></div>
<div class="vl" style="left:1134px;top:563px;height:33px;background:#dfe7f5"></div>
<div class="vl" style="left:1257px;top:563px;height:33px;background:#dfe7f5"></div>
<div class="vl" style="left:1348px;top:563px;height:33px;background:#dfe7f5"></div>
<div class="vl" style="left:1459px;top:563px;height:33px;background:#dfe7f5"></div>
<div class="vl" style="left:1759px;top:563px;height:33px;background:#dfe7f5"></div>
<div class="t " style="left:83px;top:571.0px;color:#000;letter-spacing:-.1px">12:00</div>
<div class="a" style="left:17px;top:563px;width:63px;height:32px;background:#c0c0c0"></div>
<div class="t " style="left:19px;top:571.0px;">NORMAL</div>
<div class="a" style="left:135px;top:571.0px;width:16px;height:16px;border-radius:50%;background:#96d9e5"></div>
<div class="t r" style="left:132px;top:571.0px;width:171px;color:#000">Agendado</div>
<div class="t " style="left:308px;top:571.0px;color:#000">PARTICULAR</div>
<div class="t r n" style="left:490px;top:571.0px;width:61px;color:#000">318075</div>
<div class="t " style="left:556px;top:571.0px;color:#000">TESTE DE SISTEMA</div>
<div class="t nd" style="left:877px;top:571.0px;color:#000">31/01/1972</div>
<div class="t ar" style="left:1462px;top:563.5px;">TC ABDOME TOTAL (30min)</div>
<div class="t ar" style="left:1462px;top:577.5px;">TC TORAX (30min)</div>
<div class="t n" style="left:1762px;top:571.0px;color:#000">14/01/2021 08:51:06</div>
<div class="row" style="top:596px;height:19px;background:#bbcef0;border-bottom-color:#dfe7f5"></div>
<div class="ind" style="top:596px;height:19px"></div>
<div class="vl" style="left:80px;top:596px;height:19px;background:#dfe7f5"></div>
<div class="vl" style="left:131px;top:596px;height:19px;background:#dfe7f5"></div>
<div class="vl" style="left:305px;top:596px;height:19px;background:#dfe7f5"></div>
<div class="vl" style="left:489px;top:596px;height:19px;background:#dfe7f5"></div>
<div class="vl" style="left:553px;top:596px;height:19px;background:#dfe7f5"></div>
<div class="vl" style="left:874px;top:596px;height:19px;background:#dfe7f5"></div>
<div class="vl" style="left:959px;top:596px;height:19px;background:#dfe7f5"></div>
<div class="vl" style="left:1134px;top:596px;height:19px;background:#dfe7f5"></div>
<div class="vl" style="left:1257px;top:596px;height:19px;background:#dfe7f5"></div>
<div class="vl" style="left:1348px;top:596px;height:19px;background:#dfe7f5"></div>
<div class="vl" style="left:1459px;top:596px;height:19px;background:#dfe7f5"></div>
<div class="vl" style="left:1759px;top:596px;height:19px;background:#dfe7f5"></div>
<div class="t " style="left:83px;top:597.0px;color:#000;letter-spacing:-.1px">12:30</div>
<div class="row" style="top:615px;height:19px;background:#f3f5f4;border-bottom-color:#e6e6e6"></div>
<div class="ind" style="top:615px;height:19px"></div>
<div class="vl" style="left:80px;top:615px;height:19px;"></div>
<div class="vl" style="left:131px;top:615px;height:19px;"></div>
<div class="vl" style="left:305px;top:615px;height:19px;"></div>
<div class="vl" style="left:489px;top:615px;height:19px;"></div>
<div class="vl" style="left:553px;top:615px;height:19px;"></div>
<div class="vl" style="left:874px;top:615px;height:19px;"></div>
<div class="vl" style="left:959px;top:615px;height:19px;"></div>
<div class="vl" style="left:1134px;top:615px;height:19px;"></div>
<div class="vl" style="left:1257px;top:615px;height:19px;"></div>
<div class="vl" style="left:1348px;top:615px;height:19px;"></div>
<div class="vl" style="left:1459px;top:615px;height:19px;"></div>
<div class="vl" style="left:1759px;top:615px;height:19px;"></div>
<div class="t " style="left:83px;top:616.0px;color:#000;letter-spacing:-.1px">13:00</div>
<div class="row" style="top:634px;height:19px;background:#f3f5f4;border-bottom-color:#e6e6e6"></div>
<div class="ind" style="top:634px;height:19px"></div>
<div class="vl" style="left:80px;top:634px;height:19px;"></div>
<div class="vl" style="left:131px;top:634px;height:19px;"></div>
<div class="vl" style="left:305px;top:634px;height:19px;"></div>
<div class="vl" style="left:489px;top:634px;height:19px;"></div>
<div class="vl" style="left:553px;top:634px;height:19px;"></div>
<div class="vl" style="left:874px;top:634px;height:19px;"></div>
<div class="vl" style="left:959px;top:634px;height:19px;"></div>
<div class="vl" style="left:1134px;top:634px;height:19px;"></div>
<div class="vl" style="left:1257px;top:634px;height:19px;"></div>
<div class="vl" style="left:1348px;top:634px;height:19px;"></div>
<div class="vl" style="left:1459px;top:634px;height:19px;"></div>
<div class="vl" style="left:1759px;top:634px;height:19px;"></div>
<div class="t " style="left:83px;top:635.0px;color:#000;letter-spacing:-.1px">13:30</div>
<div class="row" style="top:653px;height:19px;background:#bbcef0;border-bottom-color:#dfe7f5"></div>
<div class="ind" style="top:653px;height:19px"></div>
<div class="vl" style="left:80px;top:653px;height:19px;background:#dfe7f5"></div>
<div class="vl" style="left:131px;top:653px;height:19px;background:#dfe7f5"></div>
<div class="vl" style="left:305px;top:653px;height:19px;background:#dfe7f5"></div>
<div class="vl" style="left:489px;top:653px;height:19px;background:#dfe7f5"></div>
<div class="vl" style="left:553px;top:653px;height:19px;background:#dfe7f5"></div>
<div class="vl" style="left:874px;top:653px;height:19px;background:#dfe7f5"></div>
<div class="vl" style="left:959px;top:653px;height:19px;background:#dfe7f5"></div>
<div class="vl" style="left:1134px;top:653px;height:19px;background:#dfe7f5"></div>
<div class="vl" style="left:1257px;top:653px;height:19px;background:#dfe7f5"></div>
<div class="vl" style="left:1348px;top:653px;height:19px;background:#dfe7f5"></div>
<div class="vl" style="left:1459px;top:653px;height:19px;background:#dfe7f5"></div>
<div class="vl" style="left:1759px;top:653px;height:19px;background:#dfe7f5"></div>
<div class="t " style="left:83px;top:654.0px;color:#000;letter-spacing:-.1px">14:00</div>
<div class="a" style="left:17px;top:653px;width:63px;height:18px;background:#c0c0c0"></div>
<div class="t " style="left:19px;top:654.0px;">NORMAL</div>
<div class="a" style="left:135px;top:654.0px;width:16px;height:16px;border-radius:50%;background:#96d9e5"></div>
<div class="t r" style="left:132px;top:654.0px;width:171px;color:#000">Agendado</div>
<div class="t " style="left:308px;top:654.0px;color:#000">PARTICULAR</div>
<div class="t r n" style="left:490px;top:654.0px;width:61px;color:#000">299005</div>
<div class="t " style="left:556px;top:654.0px;color:#000">TESTE 2 DOIS</div>
<div class="t nd" style="left:877px;top:654.0px;color:#000">20/05/2000</div>
<div class="t ar" style="left:1462px;top:653.5px;">TC RINS (30min)</div>
<div class="t n" style="left:1762px;top:654.0px;color:#000">14/01/2021 08:52:05</div>
<div class="row" style="top:672px;height:19px;background:#316ac5;border-bottom-color:#dfe7f5"></div>
<div class="ind" style="top:672px;height:19px"></div>
<div class="vl" style="left:80px;top:672px;height:19px;background:#dfe7f5"></div>
<div class="vl" style="left:131px;top:672px;height:19px;background:#dfe7f5"></div>
<div class="vl" style="left:305px;top:672px;height:19px;background:#dfe7f5"></div>
<div class="vl" style="left:489px;top:672px;height:19px;background:#dfe7f5"></div>
<div class="vl" style="left:553px;top:672px;height:19px;background:#dfe7f5"></div>
<div class="vl" style="left:874px;top:672px;height:19px;background:#dfe7f5"></div>
<div class="vl" style="left:959px;top:672px;height:19px;background:#dfe7f5"></div>
<div class="vl" style="left:1134px;top:672px;height:19px;background:#dfe7f5"></div>
<div class="vl" style="left:1257px;top:672px;height:19px;background:#dfe7f5"></div>
<div class="vl" style="left:1348px;top:672px;height:19px;background:#dfe7f5"></div>
<div class="vl" style="left:1459px;top:672px;height:19px;background:#dfe7f5"></div>
<div class="vl" style="left:1759px;top:672px;height:19px;background:#dfe7f5"></div>
<div class="t " style="left:83px;top:673.0px;color:#fff;letter-spacing:-.1px">14:30</div>
<div class="a" style="left:17px;top:672px;width:63px;height:18px;background:#c0c0c0"></div>
<div class="t " style="left:19px;top:673.0px;">NORMAL</div>
<div class="a" style="left:135px;top:673.0px;width:16px;height:16px;border-radius:50%;background:#96d9e5"></div>
<div class="t r" style="left:132px;top:673.0px;width:171px;color:#fff">Agendado</div>
<div class="t " style="left:308px;top:673.0px;color:#fff">IPASGO</div>
<div class="t r n" style="left:490px;top:673.0px;width:61px;color:#fff">302432</div>
<div class="t " style="left:556px;top:673.0px;color:#fff">TESTE 3</div>
<div class="t nd" style="left:877px;top:673.0px;color:#fff">10/10/2015</div>
<div class="t ar" style="left:1462px;top:672.5px;">TC ORBITA (30min)</div>
<div class="t n" style="left:1762px;top:673.0px;color:#fff">14/01/2021 08:52:44</div>
<div class="row" style="top:691px;height:19px;background:#bbcef0;border-bottom-color:#dfe7f5"></div>
<div class="ind" style="top:691px;height:19px"></div>
<div class="vl" style="left:80px;top:691px;height:19px;background:#dfe7f5"></div>
<div class="vl" style="left:131px;top:691px;height:19px;background:#dfe7f5"></div>
<div class="vl" style="left:305px;top:691px;height:19px;background:#dfe7f5"></div>
<div class="vl" style="left:489px;top:691px;height:19px;background:#dfe7f5"></div>
<div class="vl" style="left:553px;top:691px;height:19px;background:#dfe7f5"></div>
<div class="vl" style="left:874px;top:691px;height:19px;background:#dfe7f5"></div>
<div class="vl" style="left:959px;top:691px;height:19px;background:#dfe7f5"></div>
<div class="vl" style="left:1134px;top:691px;height:19px;background:#dfe7f5"></div>
<div class="vl" style="left:1257px;top:691px;height:19px;background:#dfe7f5"></div>
<div class="vl" style="left:1348px;top:691px;height:19px;background:#dfe7f5"></div>
<div class="vl" style="left:1459px;top:691px;height:19px;background:#dfe7f5"></div>
<div class="vl" style="left:1759px;top:691px;height:19px;background:#dfe7f5"></div>
<div class="t " style="left:83px;top:692.0px;color:#000;letter-spacing:-.1px">15:00</div>
<div class="a" style="left:17px;top:691px;width:63px;height:18px;background:#c0c0c0"></div>
<div class="t " style="left:19px;top:692.0px;">NORMAL</div>
<div class="a" style="left:135px;top:692.0px;width:16px;height:16px;border-radius:50%;background:#96d9e5"></div>
<div class="t r" style="left:132px;top:692.0px;width:171px;color:#000">Agendado</div>
<div class="t " style="left:308px;top:692.0px;color:#000">PARTICULAR</div>
<div class="t r n" style="left:490px;top:692.0px;width:61px;color:#000">318072</div>
<div class="t " style="left:556px;top:692.0px;color:#000">TESTE TES</div>
<div class="t nd" style="left:877px;top:692.0px;color:#000">01/01/1990</div>
<div class="t ar" style="left:1462px;top:691.5px;">TC RINS (30min)</div>
<div class="t n" style="left:1762px;top:692.0px;color:#000">14/01/2021 09:11:29</div>
<div class="row" style="top:710px;height:19px;background:#f3f5f4;border-bottom-color:#e6e6e6"></div>
<div class="ind" style="top:710px;height:19px"></div>
<div class="vl" style="left:80px;top:710px;height:19px;"></div>
<div class="vl" style="left:131px;top:710px;height:19px;"></div>
<div class="vl" style="left:305px;top:710px;height:19px;"></div>
<div class="vl" style="left:489px;top:710px;height:19px;"></div>
<div class="vl" style="left:553px;top:710px;height:19px;"></div>
<div class="vl" style="left:874px;top:710px;height:19px;"></div>
<div class="vl" style="left:959px;top:710px;height:19px;"></div>
<div class="vl" style="left:1134px;top:710px;height:19px;"></div>
<div class="vl" style="left:1257px;top:710px;height:19px;"></div>
<div class="vl" style="left:1348px;top:710px;height:19px;"></div>
<div class="vl" style="left:1459px;top:710px;height:19px;"></div>
<div class="vl" style="left:1759px;top:710px;height:19px;"></div>
<div class="t " style="left:83px;top:711.0px;color:#000;letter-spacing:-.1px">15:30</div>
<div class="row" style="top:729px;height:19px;background:#f3f5f4;border-bottom-color:#e6e6e6"></div>
<div class="ind" style="top:729px;height:19px"></div>
<div class="vl" style="left:80px;top:729px;height:19px;"></div>
<div class="vl" style="left:131px;top:729px;height:19px;"></div>
<div class="vl" style="left:305px;top:729px;height:19px;"></div>
<div class="vl" style="left:489px;top:729px;height:19px;"></div>
<div class="vl" style="left:553px;top:729px;height:19px;"></div>
<div class="vl" style="left:874px;top:729px;height:19px;"></div>
<div class="vl" style="left:959px;top:729px;height:19px;"></div>
<div class="vl" style="left:1134px;top:729px;height:19px;"></div>
<div class="vl" style="left:1257px;top:729px;height:19px;"></div>
<div class="vl" style="left:1348px;top:729px;height:19px;"></div>
<div class="vl" style="left:1459px;top:729px;height:19px;"></div>
<div class="vl" style="left:1759px;top:729px;height:19px;"></div>
<div class="t " style="left:83px;top:730.0px;color:#000;letter-spacing:-.1px">16:00</div>
<div class="row" style="top:748px;height:19px;background:#f3f5f4;border-bottom-color:#e6e6e6"></div>
<div class="ind" style="top:748px;height:19px"></div>
<div class="vl" style="left:80px;top:748px;height:19px;"></div>
<div class="vl" style="left:131px;top:748px;height:19px;"></div>
<div class="vl" style="left:305px;top:748px;height:19px;"></div>
<div class="vl" style="left:489px;top:748px;height:19px;"></div>
<div class="vl" style="left:553px;top:748px;height:19px;"></div>
<div class="vl" style="left:874px;top:748px;height:19px;"></div>
<div class="vl" style="left:959px;top:748px;height:19px;"></div>
<div class="vl" style="left:1134px;top:748px;height:19px;"></div>
<div class="vl" style="left:1257px;top:748px;height:19px;"></div>
<div class="vl" style="left:1348px;top:748px;height:19px;"></div>
<div class="vl" style="left:1459px;top:748px;height:19px;"></div>
<div class="vl" style="left:1759px;top:748px;height:19px;"></div>
<div class="t " style="left:83px;top:749.0px;color:#000;letter-spacing:-.1px">16:30</div>
<div class="row" style="top:767px;height:19px;background:#f3f5f4;border-bottom-color:#e6e6e6"></div>
<div class="ind" style="top:767px;height:19px"></div>
<div class="vl" style="left:80px;top:767px;height:19px;"></div>
<div class="vl" style="left:131px;top:767px;height:19px;"></div>
<div class="vl" style="left:305px;top:767px;height:19px;"></div>
<div class="vl" style="left:489px;top:767px;height:19px;"></div>
<div class="vl" style="left:553px;top:767px;height:19px;"></div>
<div class="vl" style="left:874px;top:767px;height:19px;"></div>
<div class="vl" style="left:959px;top:767px;height:19px;"></div>
<div class="vl" style="left:1134px;top:767px;height:19px;"></div>
<div class="vl" style="left:1257px;top:767px;height:19px;"></div>
<div class="vl" style="left:1348px;top:767px;height:19px;"></div>
<div class="vl" style="left:1459px;top:767px;height:19px;"></div>
<div class="vl" style="left:1759px;top:767px;height:19px;"></div>
<div class="t " style="left:83px;top:768.0px;color:#000;letter-spacing:-.1px">17:00</div>
<div class="row" style="top:786px;height:19px;background:#f3f5f4;border-bottom-color:#e6e6e6"></div>
<div class="ind" style="top:786px;height:19px"></div>
<div class="vl" style="left:80px;top:786px;height:19px;"></div>
<div class="vl" style="left:131px;top:786px;height:19px;"></div>
<div class="vl" style="left:305px;top:786px;height:19px;"></div>
<div class="vl" style="left:489px;top:786px;height:19px;"></div>
<div class="vl" style="left:553px;top:786px;height:19px;"></div>
<div class="vl" style="left:874px;top:786px;height:19px;"></div>
<div class="vl" style="left:959px;top:786px;height:19px;"></div>
<div class="vl" style="left:1134px;top:786px;height:19px;"></div>
<div class="vl" style="left:1257px;top:786px;height:19px;"></div>
<div class="vl" style="left:1348px;top:786px;height:19px;"></div>
<div class="vl" style="left:1459px;top:786px;height:19px;"></div>
<div class="vl" style="left:1759px;top:786px;height:19px;"></div>
<div class="t " style="left:83px;top:787.0px;color:#000;letter-spacing:-.1px">17:30</div>
<div class="row" style="top:805px;height:19px;background:#f3f5f4;border-bottom-color:#e6e6e6"></div>
<div class="ind" style="top:805px;height:19px"></div>
<div class="vl" style="left:80px;top:805px;height:19px;"></div>
<div class="vl" style="left:131px;top:805px;height:19px;"></div>
<div class="vl" style="left:305px;top:805px;height:19px;"></div>
<div class="vl" style="left:489px;top:805px;height:19px;"></div>
<div class="vl" style="left:553px;top:805px;height:19px;"></div>
<div class="vl" style="left:874px;top:805px;height:19px;"></div>
<div class="vl" style="left:959px;top:805px;height:19px;"></div>
<div class="vl" style="left:1134px;top:805px;height:19px;"></div>
<div class="vl" style="left:1257px;top:805px;height:19px;"></div>
<div class="vl" style="left:1348px;top:805px;height:19px;"></div>
<div class="vl" style="left:1459px;top:805px;height:19px;"></div>
<div class="vl" style="left:1759px;top:805px;height:19px;"></div>
<div class="t " style="left:83px;top:806.0px;color:#000;letter-spacing:-.1px">18:00</div>
<svg class="a" style="left:7px;top:676px" width="8" height="11" viewBox="0 0 8 11"><path d="M1.500 1l5 4.500-5 4.500" stroke="#55598a" stroke-width="1.500" fill="none"/></svg>
<div class="a" style="left:6px;top:948px;width:1906px;height:17px;background:linear-gradient(#f2f2f2,#fbfbfb 40%,#f4f4f4 60%,#ececec)"></div>
<div class="a" style="left:22px;top:949px;width:926px;height:15px;background:linear-gradient(#fdfdfd 0,#f1f1f1 12%,#e4e4e4 48%,#d5d5d5 52%,#dfdfdf 100%);border:1px solid #9c9c9c;border-radius:2px"></div>
<div class="a" style="left:481px;top:953px;width:8px;height:7px;background:repeating-linear-gradient(90deg,#75757d 0 1px,transparent 1px 2px)"></div>
<div class="a" style="left:10px;top:951px;border:5.5px solid transparent;border-right:6px solid #4a5080;border-left:0"></div>
<div class="a" style="left:1901px;top:951px;border:5.5px solid transparent;border-left:6px solid #4a5080;border-right:0"></div>
<div class="a" style="left:3px;top:967px;width:1911px;height:47px;border:1px solid #a0a0a0;border-top:0"></div>
<div class="btn" style="left:7px;top:972px;width:98px;height:18px;"></div>
<div class="t c" style="left:7px;top:973px;width:98px;">Agendar/Editar</div>
<div class="btn" style="left:7px;top:992px;width:98px;height:18px;"></div>
<div class="t c" style="left:7px;top:993px;width:82px;">Situação(status)</div>
<div class="a" style="left:90px;top:995px;width:2px;height:12px;background:#7a7a7a"></div><div class="a" style="left:93px;top:999px;border:4px solid transparent;border-top:5px solid #000;border-bottom:0"></div>
<div class="btn" style="left:106px;top:972px;width:93px;height:18px;"></div>
<div class="t c" style="left:106px;top:973px;width:93px;">Cancelar</div>
<div class="btn" style="left:106px;top:991px;width:93px;height:19px;border:2px solid #0078d7"></div>
<div class="t c" style="left:106px;top:993px;width:93px;">Criar Novo Horário</div>
<div class="btn" style="left:201px;top:972px;width:91px;height:18px;"></div>
<div class="t c" style="left:201px;top:973px;width:91px;">Transferir</div>
<div class="btn" style="left:201px;top:992px;width:91px;height:18px;"></div>
<div class="t c" style="left:201px;top:993px;width:91px;">Visualizar</div>
<div class="btn" style="left:294px;top:972px;width:113px;height:18px;"></div>
<div class="t c" style="left:294px;top:973px;width:113px;">Bloquear/Desbloquear</div>
<div class="btn" style="left:294px;top:992px;width:113px;height:18px;"></div>
<div class="t c" style="left:294px;top:993px;width:113px;">Copiar</div>
<div class="btn" style="left:409px;top:972px;width:71px;height:18px;"></div>
<div class="t c" style="left:409px;top:973px;width:71px;">Internar</div>
<div class="btn" style="left:409px;top:992px;width:71px;height:18px;"></div>
<div class="t c" style="left:409px;top:993px;width:71px;">Conta</div>
<div class="btn" style="left:482px;top:972px;width:92px;height:18px;"></div>
<div class="t c" style="left:482px;top:973px;width:92px;">Editar Ficha</div>
<div class="btn" style="left:482px;top:992px;width:92px;height:18px;"></div>
<div class="t c" style="left:482px;top:993px;width:92px;">Vincular Ficha</div>
<div class="btn" style="left:576px;top:972px;width:92px;height:18px;"></div>
<div class="t c" style="left:576px;top:973px;width:92px;">Registrar Exame</div>
<div class="btn" style="left:576px;top:992px;width:92px;height:18px;"></div>
<div class="t c" style="left:576px;top:993px;width:92px;">Avaliar Satisfação</div>
<div class="btn" style="left:670px;top:972px;width:93px;height:18px;"></div>
<div class="t c" style="left:670px;top:973px;width:93px;">Ag. Cancelados</div>
<div class="btn" style="left:670px;top:992px;width:93px;height:18px;"></div>
<div class="t c" style="left:670px;top:993px;width:93px;">Exames desta data</div>
<div class="btn" style="left:766px;top:972px;width:92px;height:18px;"></div>
<div class="t c" style="left:766px;top:973px;width:92px;">Lib. Hr. Excedente</div>
<div class="btn" style="left:766px;top:992px;width:92px;height:18px;"></div>
<div class="t c" style="left:766px;top:993px;width:92px;">Ag. Consultas</div>
<div class="btn" style="left:861px;top:972px;width:71px;height:18px;"></div>
<div class="t c" style="left:861px;top:973px;width:54px;">Protocolo</div>
<div class="a" style="left:919px;top:975px;width:2px;height:12px;background:#7a7a7a"></div><div class="a" style="left:922px;top:979px;border:4px solid transparent;border-top:5px solid #000;border-bottom:0"></div>
<div class="btn" style="left:861px;top:992px;width:71px;height:18px;"></div>
<div class="t c" style="left:861px;top:993px;width:71px;">Preparo</div>
<div class="btn" style="left:935px;top:972px;width:92px;height:18px;"></div>
<div class="t c" style="left:935px;top:973px;width:75px;">Dig. Img Dicom</div>
<div class="a" style="left:1012px;top:975px;width:2px;height:12px;background:#7a7a7a"></div><div class="a" style="left:1015px;top:979px;border:4px solid transparent;border-top:5px solid #000;border-bottom:0"></div>
<div class="btn" style="left:935px;top:992px;width:92px;height:18px;"></div>
<div class="t c" style="left:935px;top:993px;width:92px;">Horários Confirm.</div>
<div class="a" style="left:0;top:1021px;width:1920px;height:5px;background:#f0f0f0"></div>
<div class="a" style="left:0px;top:1022px;width:303px;height:4px;border-top:1px solid #a6a6a6;border-left:1px solid #a6a6a6;border-right:1px solid #fff"></div>
<div class="a" style="left:306px;top:1022px;width:1162px;height:4px;border-top:1px solid #a6a6a6;border-left:1px solid #a6a6a6;border-right:1px solid #fff"></div>
<div class="a" style="left:1471px;top:1022px;width:171px;height:4px;border-top:1px solid #a6a6a6;border-left:1px solid #a6a6a6;border-right:1px solid #fff"></div>
<div class="a" style="left:1645px;top:1022px;width:126px;height:4px;border-top:1px solid #a6a6a6;border-left:1px solid #a6a6a6;border-right:1px solid #fff"></div>
<div class="a" style="left:1774px;top:1022px;width:102px;height:4px;border-top:1px solid #a6a6a6;border-left:1px solid #a6a6a6;border-right:1px solid #fff"></div>
<div class="a" style="left:1879px;top:1022px;width:41px;height:4px;border-top:1px solid #a6a6a6;border-left:1px solid #a6a6a6;border-right:1px solid #fff"></div>
<div class="a" style="left:6px;top:389px;width:1906px;height:1px;background:#a4a4a4"></div>
<div class="ob" style="left:0px;top:112px;width:316px;height:61px"></div>
<div class="ob" style="left:320px;top:106px;width:1593px;height:91px"></div>
<div class="ob" style="left:114px;top:205px;width:1362px;height:149px"></div>
<div class="ob" style="left:0px;top:354px;width:332px;height:35px"></div>
<div class="ob" style="left:5px;top:961px;width:1029px;height:63px"></div>
<div class="a" style="left:101px;top:981px;width:104px;height:39px;border:3px solid #fb4141;box-shadow:1px 2px 4px rgba(0,0,0,.35),inset 1px 2px 4px rgba(0,0,0,.35)"></div>
<div class="circ co" style="left:226px;top:113.5px">A</div>
<div class="circ cr" style="left:276px;top:122px">4</div>
<div class="circ co" style="left:412px;top:129px">B</div>
<div class="circ cr" style="left:453px;top:150px">5</div>
<div class="circ co" style="left:38px;top:259px">C</div>
<div class="circ cr" style="left:81px;top:278px">6</div>
<div class="circ co" style="left:225px;top:390px">D</div>
<div class="circ cr" style="left:267px;top:402px">7</div>
<div class="circ co" style="left:406px;top:713px">E</div>
<div class="circ co" style="left:406px;top:906px">F</div>
<div class="circ cr" style="left:146px;top:917px">8</div>
</body></html>
